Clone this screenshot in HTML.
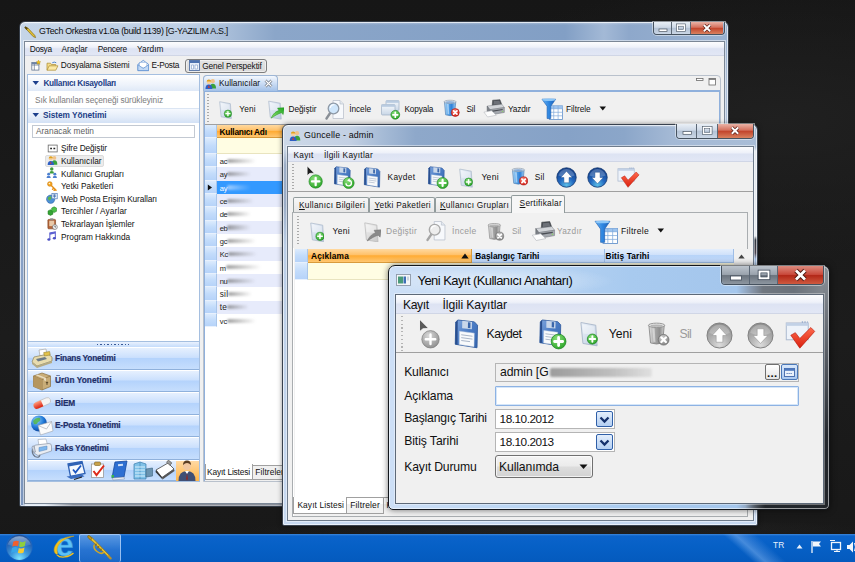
<!DOCTYPE html>
<html lang="tr">
<head>
<meta charset="utf-8">
<title>GTech Orkestra</title>
<style>
*{box-sizing:border-box;margin:0;padding:0}
html,body{width:855px;height:562px;overflow:hidden}
body{background:#1a1a1a;font-family:"Liberation Sans",sans-serif;font-size:11px;color:#111;position:relative}
.abs,.t{position:absolute}
.t{white-space:nowrap;line-height:1;color:#111}
.b{font-weight:bold}
u{text-decoration:underline;text-underline-offset:1px}
.menubar{background:linear-gradient(180deg,#fdfdfe 0,#eef1f9 40%,#dde3f3 52%,#e2e7f5 100%);border-bottom:1px solid #d0d6e6}
.cap{display:flex;border:1px solid #46525f;border-top:none;border-radius:0 0 4px 4px;overflow:hidden;box-shadow:0 0 0 1px rgba(255,255,255,.45)}
.cap i{display:block;height:100%;border-right:1px solid #5b6775;background:linear-gradient(180deg,#e9eff6 0,#cdd8e6 45%,#b3c2d5 50%,#cbd7e6 100%);position:relative}
.cap i.x{border-right:none;background:linear-gradient(180deg,#eab3a6 0,#d4705d 45%,#c1422a 50%,#d9815f 100%)}
.cap.act i{background:linear-gradient(180deg,#bcc4cd 0,#9aa3ad 47%,#6b747e 53%,#8d96a0 100%)}
.cap.act i.x{background:linear-gradient(180deg,#dd8b7e 0,#c9493b 47%,#b22818 53%,#cf5a40 100%)}
.navbtn{background:linear-gradient(180deg,#e6f0fe 0,#cbe0fd 45%,#b4d3fc 50%,#c6defd 100%);border-top:1px solid #fff;border-bottom:1px solid #8fb1dc}
.hdr{background:linear-gradient(180deg,#e4eefc 0,#cfe1fa 45%,#b8d4f8 50%,#c3dafa 100%);border-right:1px solid #9ebde6;border-bottom:1px solid #9ebde6}
.hdro{background:linear-gradient(180deg,#ffd9a0 0,#ffc169 45%,#ffab33 52%,#ffc772 100%);border-right:1px solid #d99b3c;border-bottom:1px solid #d99b3c}
.ind{background:linear-gradient(180deg,#dcebfd 0,#c3dcfb 50%,#b6d3f9 100%);border-bottom:1px solid #e8f1fd;border-right:1px solid #a9c6ea}
.grip{width:2px;background:repeating-linear-gradient(180deg,#a9a9a9 0,#a9a9a9 1px,transparent 1px,transparent 3px)}
.smear{filter:blur(.9px);border-radius:2px}
.tab{border:1px solid #919b9c;border-bottom:none;border-radius:2px 2px 0 0;background:linear-gradient(180deg,#f7f7f7,#e6e6e6)}
</style>
</head>
<body>
<div class="abs" style="left:0.0px;top:0.0px;width:855.0px;height:562.0px;background:radial-gradient(ellipse 420px 14px at 560px 529px,rgba(60,60,60,.3),rgba(40,40,40,0) 75%),radial-gradient(ellipse 500px 200px at 780px 120px,#202020,rgba(26,26,26,0) 70%),linear-gradient(180deg,#161616,#1c1c1c 60%,#181818)"></div>
<div class="abs" style="left:0.0px;top:534.0px;width:855.0px;height:28.0px;background:linear-gradient(42deg,rgba(255,255,255,0) 0,rgba(255,255,255,0) 85%,rgba(130,180,240,.5) 86.4%,rgba(120,170,235,.35) 87.2%,rgba(255,255,255,0) 88.8%),linear-gradient(180deg,#3d88dc 0,#0b63ca 2px,#0660c6 45%,#045abe 100%)"></div>
<svg class="abs" style="left:4px;top:533px" width="31" height="29" viewBox="0 0 31 29"><defs><radialGradient id="orb" cx="50%" cy="95%" r="95%"><stop offset="0" stop-color="#7fe4ff"/><stop offset=".35" stop-color="#3d9be0"/><stop offset=".75" stop-color="#2563b4"/><stop offset="1" stop-color="#1e4f98"/></radialGradient><linearGradient id="orbh" x1="0" y1="0" x2="0" y2="1"><stop offset="0" stop-color="#fff" stop-opacity=".5"/><stop offset="1" stop-color="#fff" stop-opacity=".05"/></linearGradient></defs><circle cx="15.3" cy="14.3" r="13.4" fill="#2a69bd" opacity=".55"/><circle cx="15.3" cy="14.3" r="12.6" fill="url(#orb)"/><path d="M3.500 11.500 A12.500 12.500 0 0 1 27 11.500 Q15 16 3.500 11.500Z" fill="url(#orbh)"/><path d="M9.200 8.800 q2.900 -1.900 5.700 -.5 l-.9 5 q-2.800 -1.400 -5.700 .4z" fill="#f0602e"/><path d="M16 8.600 q2.800 1.300 5.700 -.5 l-.9 5 q-2.900 1.700 -5.700 .4z" fill="#8fcf3c"/><path d="M8 15 q2.900 -1.800 5.700 -.4 l-.9 5 q-2.800 -1.400 -5.700 .4z" fill="#38a6ea"/><path d="M14.800 14.900 q2.800 1.300 5.700 -.5 l-.9 5 q-2.900 1.700 -5.700 .4z" fill="#f9cb2e"/></svg>
<svg class="abs" style="left:51px;top:534px" width="28" height="26" viewBox="0 0 28 26"><text x="4.200" y="21.600" font-family="Liberation Sans,sans-serif" font-size="33" font-weight="bold" fill="#5cc1f7" stroke="#2f8fd6" stroke-width=".5">e</text><path d="M5.500 20.500 C-1 16 6 2.500 23 2.200 C11 4.500 3.500 12 6.800 19.500" fill="#f5c21a" stroke="#d9a30c" stroke-width=".5"/><path d="M6 20.800 C9 24.500 18 23.500 22.500 19" fill="none" stroke="#f5c21a" stroke-width="1.300"/></svg>
<div class="abs" style="left:79.0px;top:534.0px;width:41.5px;height:28.0px;background:linear-gradient(180deg,rgba(170,205,250,.5),rgba(95,150,230,.38) 55%,rgba(80,135,220,.3));border:1px solid rgba(190,218,252,.75);border-bottom:none;border-radius:2px"></div>
<svg class="abs" style="left:87px;top:535px" width="25" height="25" viewBox="0 0 25 25"><path d="M1.500 1.200 Q3 5.500 5.500 6.300 L21.500 22.200 L23 21 L7.200 4.700 Q5.800 2.300 1.500 1.200Z" fill="#e9c433" stroke="#8d6e12" stroke-width=".7"/><ellipse cx="2.700" cy="2.600" rx="2.500" ry="1.300" transform="rotate(45 2.700 2.600)" fill="#c59a1c" stroke="#7a5f10" stroke-width=".6"/><path d="M7.500 9.500 Q5.500 13 10 16.500 Q14.500 20 17 17" fill="none" stroke="#d1a826" stroke-width="1.500"/><path d="M9.500 8.800 L8 10.500 M12 11.300 L10.500 13 M14.500 13.800 L13 15.500" stroke="#8d6e12" stroke-width="1.300"/><path d="M21.500 21.300 L23.600 23.400" stroke="#b8922a" stroke-width="2.200" stroke-linecap="round"/></svg>
<div class="t" id="t0" style="left:773.00px;top:541.40px;font-size:8.40px;letter-spacing:0.164px;color:#e9f1fb;">TR</div>
<svg class="abs" style="left:794px;top:538px" width="61" height="18" viewBox="0 0 61 18"><path d="M2.5 10.5 L5.5 6.5 L8.5 10.5Z" fill="#e8f0fb"/><path d="M18 3 V15" stroke="#f2f6fc" stroke-width="1.3"/><path d="M19 3.5 h8 l-2 2.5 l2 2.5 h-8z" fill="#f2f6fc"/><rect x="37.5" y="4.5" width="9" height="7" fill="none" stroke="#f2f6fc" stroke-width="1.3"/><path d="M36 2.5 h5 M40 13.5 h6 M43 11.5 v2" stroke="#f2f6fc" stroke-width="1.2"/><path d="M53 7 h2.5 l3.5 -3.5 v11 l-3.500 -3.5 h-2.500z" fill="#f2f6fc"/><path d="M60.500 5 q2 4 0 8" stroke="#f2f6fc" fill="none" stroke-width="1"/></svg>
<!-- window 1 : GTech Orkestra -->
<div class="abs" style="left:19.0px;top:21.2px;width:710.0px;height:486.3px;border:1px solid #343c47;border-radius:6px 6px 2px 2px;background:linear-gradient(90deg,rgba(0,0,0,0) 0,rgba(0,0,0,0) 3.5%,rgba(15,25,45,.95) 7.5%,rgba(15,25,45,.95) 100%) 0 100%/100% 4px no-repeat,linear-gradient(180deg,rgba(150,172,204,0) 0,rgba(150,172,204,0) 8%,rgba(132,158,196,.9) 40%,rgba(120,146,186,.95) 100%) 0 0/5px 100% no-repeat,linear-gradient(180deg,rgba(150,172,204,0) 0,rgba(150,172,204,0) 5%,rgba(176,194,218,.9) 12%,rgba(176,194,218,.9) 100%) 100% 0/5px 100% no-repeat,linear-gradient(180deg,rgba(255,255,255,.35) 0,rgba(255,255,255,0) 3px,rgba(255,255,255,0) 100%),linear-gradient(90deg,#c5d5e8 0,#bdcee4 24%,#a5bbd7 30%,#8ba6c9 36%,#829fc5 77%,#a3b9d6 82.500%,#8ea8cb 86%,#9ab2d1 100%);box-shadow:inset 0 0 0 1px rgba(255,255,255,.65)"></div>
<svg class="abs" style="left:23.500px;top:25.500px" width="13" height="13" viewBox="0 0 14 14"><path d="M1.5 1.500 L4 2 L11.500 10 L12.500 12.500 L10 11.500 L2.500 3.500Z" fill="#e3c233" stroke="#7a6212" stroke-width=".7"/><path d="M1 1 L3.500 3.500" stroke="#5c4a0e" stroke-width="2"/></svg>
<div class="t" id="t1" style="left:39.00px;top:27.25px;font-size:8.90px;letter-spacing:-0.317px;color:#0c0c0c;">GTech Orkestra v1.0a (build 1139) [G-YAZILIM A.S.]</div>
<div class="abs cap" style="left:652.5px;top:22.0px;width:72.0px;height:13.0px;"><i style="width:19px"><svg width="18" height="12" viewBox="0 0 18 12" style="position:absolute;left:0;top:0"><rect x="5" y="7" width="8" height="2.600" fill="#fff" stroke="#4a5562" stroke-width=".7"/></svg></i><i style="width:19px"><svg width="18" height="12" viewBox="0 0 18 12" style="position:absolute;left:0;top:0"><rect x="5.500" y="3" width="7" height="5.500" fill="none" stroke="#fff" stroke-width="1.700"/><rect x="4.400" y="1.900" width="9.200" height="7.700" fill="none" stroke="#4a5562" stroke-width=".6"/><rect x="6.700" y="4.200" width="4.600" height="3.100" fill="none" stroke="#4a5562" stroke-width=".5"/></svg></i><i class="x" style="width:33px"><svg width="32" height="12" viewBox="0 0 32 12" style="position:absolute;left:0;top:0"><path d="M12.800 3 L19.200 9.300 M19.200 3 L12.800 9.300" stroke="#5a2018" stroke-width="3.200"/><path d="M12.800 3 L19.200 9.300 M19.200 3 L12.800 9.300" stroke="#fff" stroke-width="1.900"/></svg></i></div>
<div class="abs" style="left:24.0px;top:41.0px;width:701.0px;height:463.0px;background:#f0f0f0;border:1px solid #7b8796;box-shadow:0 0 0 1px rgba(255,255,255,.5)"></div>
<div class="abs menubar" style="left:25.0px;top:42.0px;width:699.0px;height:14.0px;"></div>
<div class="t" id="t2" style="left:29.70px;top:44.95px;font-size:8.30px;letter-spacing:-0.286px;">Dosya</div>
<div class="t" id="t3" style="left:61.60px;top:44.95px;font-size:8.30px;letter-spacing:-0.040px;">Araçlar</div>
<div class="t" id="t4" style="left:97.70px;top:44.95px;font-size:8.30px;letter-spacing:-0.229px;">Pencere</div>
<div class="t" id="t5" style="left:137.00px;top:44.95px;font-size:8.30px;letter-spacing:0.060px;">Yardım</div>
<svg class="abs" style="left:31px;top:60px" width="10" height="11" viewBox="0 0 12 13"><rect x="1" y="3" width="8.500" height="9" fill="#fff" stroke="#5d6f8c" stroke-width=".9"/><path d="M1 6h8.500M4 3v9" stroke="#5d6f8c" stroke-width=".8"/><rect x="1" y="3" width="8.500" height="2" fill="#6d83a8"/><path d="M9 0 l.8 1.800 l1.900 .2 l-1.400 1.300 l.4 1.900 l-1.700 -1 l-1.700 1 l.4 -1.900 l-1.400 -1.300 l1.900 -.2z" fill="#f2c21c" stroke="#a98209" stroke-width=".4"/></svg>
<svg class="abs" style="left:46px;top:61px" width="12.500" height="10.500" viewBox="0 0 14 12"><path d="M1 10.500 V2.500 H5 L6 4 H11 V5.500" fill="#f5dc8a" stroke="#a98a2e" stroke-width=".8"/><path d="M1 10.500 L3.500 5.500 H13.500 L11 10.500Z" fill="#fbe9a6" stroke="#a98a2e" stroke-width=".8"/><path d="M7 2 q2.500 -1.500 4.500 0" fill="none" stroke="#3b78c9" stroke-width="1"/></svg>
<div class="t" id="t6" style="left:60.80px;top:61.25px;font-size:8.30px;letter-spacing:-0.136px;">Dosyalama Sistemi</div>
<svg class="abs" style="left:136.500px;top:59px" width="12.500" height="12.500" viewBox="0 0 14 14"><path d="M1 6 L7 1.500 L13 6 V13 H1Z" fill="#dbe9fa" stroke="#5f8fd0" stroke-width=".9"/><rect x="3" y="4" width="8" height="6" fill="#fff" stroke="#8fb0dc" stroke-width=".6"/><path d="M1 6.500 L7 10.500 L13 6.500 V13 H1Z" fill="#c2d9f5" stroke="#5f8fd0" stroke-width=".8"/></svg>
<div class="t" id="t7" style="left:151.60px;top:61.25px;font-size:8.30px;letter-spacing:-0.302px;">E-Posta</div>
<div class="abs" style="left:185.0px;top:58.5px;width:82.0px;height:14.0px;border:1px solid #7d7d7d;border-radius:3px;background:linear-gradient(180deg,#e3e3e3,#d9d9d9);box-shadow:inset 0 0 0 1px rgba(255,255,255,.5)"></div>
<svg class="abs" style="left:189px;top:60px" width="11" height="11" viewBox="0 0 11 11"><rect x=".5" y=".5" width="10" height="10" fill="#e6eefa" stroke="#5573a6" stroke-width=".9"/><rect x=".5" y=".5" width="10" height="2.500" fill="#4d72b0"/><path d="M2.500 5 v4 h2 v-4z M6 5 v4 h2.500 v-4z" fill="#fff" stroke="#7c99c8" stroke-width=".6"/></svg>
<div class="t" id="t8" style="left:202.20px;top:61.85px;font-size:8.30px;letter-spacing:-0.109px;">Genel Perspektif</div>
<div class="abs" style="left:27.0px;top:74.0px;width:172.5px;height:407.5px;background:#fff;border:1px solid #a5bfe0"></div>
<div class="abs" style="left:28.0px;top:75.0px;width:170.5px;height:16.0px;background:linear-gradient(180deg,#ffffff 0,#eef3fb 60%,#dfe9f7 100%)"></div>
<svg class="abs" style="left:32px;top:80px" width="8" height="6" viewBox="0 0 8 6"><path d="M.5 1 H7 L3.750 5Z" fill="#1c3f8c"/></svg>
<div class="t b" id="t9" style="left:43.40px;top:78.95px;font-size:8.30px;letter-spacing:-0.303px;color:#1d3e86;">Kullanıcı Kısayolları</div>
<div class="t" id="t10" style="left:35.00px;top:96.45px;font-size:8.30px;letter-spacing:-0.070px;color:#7b7b7b;">Sık kullanılan seçeneği sürükleyiniz</div>
<div class="abs" style="left:28.0px;top:108.0px;width:170.5px;height:14.5px;background:linear-gradient(180deg,#f6f9fe 0,#e3ecf9 60%,#d3e1f5 100%);border-top:1px solid #dbe5f3"></div>
<svg class="abs" style="left:32px;top:112px" width="8" height="6" viewBox="0 0 8 6"><path d="M.5 1 H7 L3.750 5Z" fill="#1c3f8c"/></svg>
<div class="t b" id="t11" style="left:43.00px;top:110.95px;font-size:8.30px;letter-spacing:-0.060px;color:#1d3e86;">Sistem Yönetimi</div>
<div class="abs" style="left:32.0px;top:124.5px;width:163.0px;height:13.5px;background:#fff;border:1px solid #c3c9d2"></div>
<div class="t" id="t12" style="left:36.00px;top:127.45px;font-size:8.30px;letter-spacing:0.025px;color:#5e5e5e;">Aranacak metin</div>
<div class="abs" style="left:44.5px;top:154.5px;width:59.0px;height:12.5px;background:#ececec;border:1px solid #dcdcdc;border-radius:2px"></div>
<svg class="abs" style="left:46.800px;top:143.500px" width="11.400" height="9" viewBox="0 0 12 10"><rect x="1" y="1.200" width="10" height="7.600" fill="#fff" stroke="#6a6a6a" stroke-width=".9"/><path d="M3.200 5h2M6.800 5h2" stroke="#222" stroke-width="1.900"/></svg>
<svg class="abs" style="left:46.8px;top:155.3px;" width="11.0" height="10.5" viewBox="0 0 13 13"><circle cx="8.8" cy="3.6" r="2.4" fill="#f0c28a"/><path d="M5.5 12 Q5.5 6.6 8.8 6.6 Q12.5 6.6 12.5 12Z" fill="#3aa23a"/><circle cx="4.4" cy="4.4" r="2.5" fill="#f5cf9c"/><path d="M4.4 1.6 a2.6 2.6 0 0 1 2.6 2.4 L1.8 4 a2.6 2.6 0 0 1 2.6 -2.4Z" fill="#e0a31e"/><path d="M.5 12.5 Q.5 7.4 4.4 7.4 Q8.3 7.4 8.3 12.5Z" fill="#2d5fc4"/><path d="M4.4 7.6 L3.6 10.5 L4.4 11.5 L5.2 10.5Z" fill="#d63a2a"/></svg>
<svg class="abs" style="left:46.300px;top:167.300px" width="11.500" height="11" viewBox="0 0 12 12"><circle cx="6" cy="2.300" r="1.900" fill="#3f9c3a"/><path d="M3.500 7 Q3.500 4.300 6 4.300 Q8.500 4.300 8.500 7Z" fill="#3f9c3a"/><circle cx="2.600" cy="7.800" r="1.600" fill="#4d7fd0"/><path d="M.3 12 Q.3 9.500 2.600 9.500 Q4.900 9.500 4.900 12Z" fill="#4d7fd0"/><circle cx="9.400" cy="7.800" r="1.600" fill="#4d7fd0"/><path d="M7.100 12 Q7.100 9.500 9.400 9.500 Q11.700 9.500 11.700 12Z" fill="#4d7fd0"/></svg>
<svg class="abs" style="left:47.200px;top:180.800px" width="10.300" height="10.600" viewBox="0 0 12 12"><circle cx="3.300" cy="3.300" r="2.700" fill="#f5a623" stroke="#c97a0a" stroke-width=".7"/><circle cx="2.800" cy="2.800" r=".9" fill="#fff3d6"/><path d="M5 5 L10.500 10.500 M8 8 L6.500 9.500 M9.600 9.600 L8.300 11" stroke="#e8921a" stroke-width="1.700" stroke-linecap="round"/></svg>
<svg class="abs" style="left:46px;top:193.200px" width="11.800" height="10.800" viewBox="0 0 14 13"><circle cx="5.500" cy="7.500" r="5" fill="#4e8fd6" stroke="#2c5f9e" stroke-width=".6"/><path d="M2 6 q2 -3 4.500 -1.500 q1 2 -1 3 q-1 2.500 -2.500 1z" fill="#5db648"/><rect x="7" y=".6" width="6.400" height="6.400" fill="#eaf2fc" stroke="#4a74b5" stroke-width=".8"/><path d="M8.500 2.500h3.500M8.500 4h3.500M10 1.500v4.500" stroke="#2f5ea6" stroke-width=".8"/></svg>
<svg class="abs" style="left:46.800px;top:205.800px" width="10.200" height="9.800" viewBox="0 0 12 12"><path d="M1 6 L4 4.500 L7 6 V10 L4 11.500 L1 10Z" fill="#35a335" stroke="#1e7a1e" stroke-width=".6"/><path d="M5.500 2.500 L8.500 1 L11.500 2.500 V6.500 L8.500 8 L5.500 6.500Z" fill="#4cc04a" stroke="#1e7a1e" stroke-width=".6"/></svg>
<svg class="abs" style="left:47.200px;top:217.800px" width="10.800" height="11.800" viewBox="0 0 12 13"><rect x="1" y="1.500" width="8.500" height="10.500" rx="1" fill="#b5653a" stroke="#7c3f1d" stroke-width=".7"/><rect x="2.500" y="3" width="5.500" height="6" fill="#e9c9a8"/><rect x="3.500" y=".3" width="3.500" height="2.200" fill="#8b8b8b"/><circle cx="8.800" cy="10" r="2.700" fill="#f1f1f1" stroke="#666" stroke-width=".7"/><path d="M8.800 8.500V10h1.200" stroke="#333" stroke-width=".7" fill="none"/></svg>
<svg class="abs" style="left:46.800px;top:231.200px" width="9.600" height="10.200" viewBox="0 0 12 13"><path d="M3.500 10.500 V2.500 L10.500 1 V9" fill="none" stroke="#5b5fd0" stroke-width="1.300"/><path d="M3.500 2.500 L10.500 1 V3.300 L3.500 4.800Z" fill="#5b5fd0"/><ellipse cx="2.300" cy="10.800" rx="2" ry="1.500" fill="#4b4fc4"/><ellipse cx="9.300" cy="9.300" rx="2" ry="1.500" fill="#4b4fc4"/></svg>
<div class="t" id="t13" style="left:61.00px;top:144.45px;font-size:8.30px;letter-spacing:-0.107px;">Şifre Değiştir</div>
<div class="t" id="t14" style="left:61.00px;top:157.05px;font-size:8.30px;letter-spacing:-0.046px;">Kullanıcılar</div>
<div class="t" id="t15" style="left:61.00px;top:169.65px;font-size:8.30px;letter-spacing:-0.062px;">Kullanıcı Grupları</div>
<div class="t" id="t16" style="left:61.00px;top:182.25px;font-size:8.30px;">Yetki Paketleri</div>
<div class="t" id="t17" style="left:61.00px;top:194.85px;font-size:8.30px;letter-spacing:-0.115px;">Web Posta Erişim Kuralları</div>
<div class="t" id="t18" style="left:61.00px;top:207.45px;font-size:8.30px;letter-spacing:0.108px;">Tercihler / Ayarlar</div>
<div class="t" id="t19" style="left:61.00px;top:220.05px;font-size:8.30px;letter-spacing:-0.037px;">Tekrarlayan İşlemler</div>
<div class="t" id="t20" style="left:61.00px;top:232.65px;font-size:8.30px;">Program Hakkında</div>
<div class="abs" style="left:28.0px;top:341.0px;width:170.5px;height:6.0px;background:linear-gradient(180deg,#eaf2fe,#c5dcfb);border-top:1px solid #a5bfe0"></div>
<div class="abs" style="left:97.0px;top:343.5px;width:32.0px;height:1.5px;background:repeating-linear-gradient(90deg,#3a5a98 0,#3a5a98 1.500px,transparent 1.500px,transparent 3.500px)"></div>
<div class="abs navbtn" style="left:28.0px;top:347.0px;width:170.5px;height:22.5px;"></div>
<div class="t b" id="t21" style="left:55.00px;top:353.65px;font-size:8.30px;letter-spacing:-0.188px;color:#1f2f68;-webkit-text-stroke:.2px #1f2f68;">Finans Yonetimi</div>
<div class="abs navbtn" style="left:28.0px;top:369.5px;width:170.5px;height:22.5px;"></div>
<div class="t b" id="t22" style="left:55.00px;top:376.15px;font-size:8.30px;letter-spacing:0.043px;color:#1f2f68;-webkit-text-stroke:.2px #1f2f68;">Ürün Yonetimi</div>
<div class="abs navbtn" style="left:28.0px;top:392.0px;width:170.5px;height:22.5px;"></div>
<div class="t b" id="t23" style="left:55.00px;top:398.65px;font-size:8.30px;letter-spacing:-0.188px;color:#1f2f68;-webkit-text-stroke:.2px #1f2f68;">BİEM</div>
<div class="abs navbtn" style="left:28.0px;top:414.5px;width:170.5px;height:22.5px;"></div>
<div class="t b" id="t24" style="left:55.00px;top:421.15px;font-size:8.30px;letter-spacing:-0.162px;color:#1f2f68;-webkit-text-stroke:.2px #1f2f68;">E-Posta Yönetimi</div>
<div class="abs navbtn" style="left:28.0px;top:437.0px;width:170.5px;height:22.5px;"></div>
<div class="t b" id="t25" style="left:55.00px;top:443.65px;font-size:8.30px;letter-spacing:-0.201px;color:#1f2f68;-webkit-text-stroke:.2px #1f2f68;">Faks Yönetimi</div>
<div class="abs navbtn" style="left:28.0px;top:459.5px;width:170.5px;height:21.0px;"></div>
<svg class="abs" style="left:31px;top:348px" width="22" height="21" viewBox="0 0 22 21"><path d="M8 2 L15 1 L16 7 L9 8Z" fill="#fff" stroke="#999" stroke-width=".6"/><path d="M3 9 L17 6 L21 9 L21 13 L6 18 L1 14 Z" fill="#e8dcae" stroke="#8c825c" stroke-width=".7"/><path d="M1 14 L6 18 L21 13 V15 L6 20 L1 16Z" fill="#b5ab84"/><path d="M5 11 L14 9 L16 11 L7 13.500Z" fill="#6c7a86"/><rect x="13" y="4" width="6" height="3.500" fill="#e3c24a" stroke="#8c7a2c" stroke-width=".5" transform="rotate(-10 16 6)"/></svg>
<svg class="abs" style="left:32px;top:371px" width="20" height="20" viewBox="0 0 20 20"><path d="M1.500 5 L10 2 L18.500 5 V15.500 L10 19 L1.500 15.500Z" fill="#c9ad78" stroke="#8a6f3e" stroke-width=".7"/><path d="M1.500 5 L10 8.500 L18.500 5 M10 8.500 V19" stroke="#8a6f3e" stroke-width=".7" fill="none"/><path d="M1.500 5 L10 8.500 V19 L1.500 15.500Z" fill="#b5965f"/><path d="M5.500 3.500 L14 7 V10 L12 9.300 V7.800 L3.700 4.300Z" fill="#e9dcc0"/><path d="M13.500 11.500 l1.500 -1 l1.500 1 l-1 .3 v2 h-1 v-2z" fill="#4a3a1e"/></svg>
<svg class="abs" style="left:32px;top:395px" width="20" height="16" viewBox="0 0 20 16"><defs><linearGradient id="pill" x1="0" y1="0" x2="0" y2="1"><stop offset="0" stop-color="#ff9a7a"/><stop offset="1" stop-color="#d81e10"/></linearGradient></defs><g transform="rotate(-24 10 8)"><rect x="1" y="5" width="18" height="6.500" rx="3.250" fill="#f4f4f4" stroke="#b9b9b9" stroke-width=".6"/><path d="M4.250 5 H10 V11.500 H4.250 A3.250 3.250 0 0 1 4.250 5Z" fill="url(#pill)"/></g></svg>
<svg class="abs" style="left:30px;top:415px" width="24" height="21" viewBox="0 0 24 21"><defs><radialGradient id="glb" cx="35%" cy="30%" r="75%"><stop offset="0" stop-color="#8fd0ff"/><stop offset=".6" stop-color="#1f77d6"/><stop offset="1" stop-color="#0c3f94"/></radialGradient></defs><circle cx="9" cy="8.500" r="8" fill="url(#glb)"/><path d="M3 6 q3 -4 7 -3 q1 3 -2 4 q-1 3 -4 2z" fill="#54b848" opacity=".85"/><path d="M8 10.500 L21.500 6.500 L23 16 L10.500 20Z" fill="#fbfbfb" stroke="#9da3ad" stroke-width=".6"/><path d="M8 10.500 L16.500 14 L21.500 6.500" fill="none" stroke="#9da3ad" stroke-width=".6"/></svg>
<svg class="abs" style="left:31px;top:438px" width="22" height="21" viewBox="0 0 22 21"><path d="M7 1.500 L15 1 L16.500 7 L8 8Z" fill="#fff" stroke="#9aa4b2" stroke-width=".6"/><path d="M3 9 Q3 7 5 7 L18 5.500 Q20.500 5.500 20.500 8 V13 L7 17.500 L3 15Z" fill="#e9edf3" stroke="#8b95a5" stroke-width=".7"/><path d="M8 9.500 L16 8 V11.500 L8 13.500Z" fill="#7db7ee" stroke="#5a86b8" stroke-width=".5"/><path d="M1.500 11 Q.5 16 4 18.500 Q8 20.500 9 17" fill="none" stroke="#6c7685" stroke-width="1.200"/><path d="M1 9.500 Q1 7.500 3 8 L4.500 14 Q2.500 15 2 13Z" fill="#cfd6e0" stroke="#7d8796" stroke-width=".6"/></svg>
<div class="abs" style="left:176.0px;top:460.5px;width:22.5px;height:20.0px;background:linear-gradient(180deg,#ffd9a3,#ffb548)"></div>
<svg class="abs" style="left:65px;top:460px" width="134" height="21" viewBox="0 0 134 21"><g><path d="M3 4 L17 1.500 L20 13.500 L5.500 16.500Z" fill="#f4f8fd" stroke="#2f62b5" stroke-width="1.300"/><path d="M3 4 L17 1.500 L17.700 4 L3.700 6.500Z" fill="#2f62b5"/><path d="M8 9.500 L10.500 12.500 L16 5.500" fill="none" stroke="#1c56c0" stroke-width="1.800"/><path d="M1.500 16.500 L17 14.500 L19.500 16.500 L6 19Z" fill="#3a6cc0"/><path d="M9 19.500 L17 17" stroke="#222" stroke-width="1.300"/></g><g transform="translate(25 0)"><rect x="1.500" y="4" width="12" height="13.500" fill="#fff" stroke="#9a9a9a" stroke-width=".8"/><rect x="4.500" y="2" width="6" height="3.500" rx="1" fill="#c8a24a" stroke="#7c6323" stroke-width=".6"/><path d="M3.500 11 L6.500 15 L14 5.500" fill="none" stroke="#dc2a1a" stroke-width="2"/></g><g transform="translate(45 0)"><path d="M5 2 L17 1 L14 17 L2 18Z" fill="#2d6fd2" stroke="#164a9e" stroke-width=".8"/><path d="M2 18 L14 17 L14.500 19 L3 20Z" fill="#e9eef6" stroke="#7a8aa3" stroke-width=".5"/><rect x="8" y="4" width="5" height="2" fill="#cfe0f7" transform="rotate(-5 10 5)"/><rect x="1.500" y="15" width="2.500" height="2.500" fill="#39b54a"/></g><g transform="translate(67 0)"><path d="M2 4 L8 2 L14 4 V19 H2Z" fill="#7fc1e8" stroke="#3d7fae" stroke-width=".7"/><path d="M8 2 V19" stroke="#3d7fae" stroke-width=".6"/><path d="M3 7h10M3 10h10M3 13h10M3 16h10" stroke="#d9f0fc" stroke-width="1"/><path d="M14 9 L20.500 8 V16 L14 17Z" fill="#6a93b0" stroke="#3b627e" stroke-width=".6"/></g><g transform="translate(88 0)"><path d="M3 10 L15 3 L21 9 L9 17.500Z" fill="#fff" stroke="#444" stroke-width=".8"/><path d="M3 10 L9 17.500 L9.500 19.500 L2.500 12Z" fill="#333"/><path d="M9 17.500 L21 9 L21.500 11 L9.500 19.500Z" fill="#555"/><rect x="14" y="1" width="4.500" height="3" fill="#9a9a9a" stroke="#444" stroke-width=".5" transform="rotate(40 16 2.500)"/></g><g transform="translate(111 0)"><circle cx="11" cy="6" r="4" fill="#f1c7a0"/><path d="M7 5 q0 -4.500 4 -4.500 q4 0 4 4.500 q-2 -2 -4 -2 q-2 0 -4 2z" fill="#5a3d22"/><path d="M2.500 21 Q2.500 11 11 11 Q19.500 11 19.500 21Z" fill="#3f4f75"/><path d="M9 11 L11 14 L13 11Z" fill="#fff"/><path d="M11 13 L10 19 L11 20.500 L12 19Z" fill="#8a2a2a"/></g></svg>
<div class="abs" style="left:202.5px;top:74.5px;width:518.5px;height:407.0px;background:#f0f0f0;border:1px solid #b9c1cc;border-radius:4px 4px 0 0"></div>
<div class="abs" style="left:203.5px;top:90.0px;width:516.5px;height:1.5px;background:#8fb0dc"></div>
<div class="abs" style="left:203.0px;top:74.5px;width:75.0px;height:16.5px;background:linear-gradient(180deg,#f4f8fd 0,#d3e2f6 40%,#a3c1e8 100%);border:1px solid #9db6d6;border-bottom:none;border-radius:4px 4px 0 0"></div>
<svg class="abs" style="left:205.0px;top:77.5px;" width="11.5" height="11.5" viewBox="0 0 13 13"><circle cx="8.8" cy="3.6" r="2.4" fill="#f0c28a"/><path d="M5.5 12 Q5.5 6.6 8.8 6.6 Q12.5 6.6 12.5 12Z" fill="#3aa23a"/><circle cx="4.4" cy="4.4" r="2.5" fill="#f5cf9c"/><path d="M4.4 1.6 a2.6 2.6 0 0 1 2.6 2.4 L1.8 4 a2.6 2.6 0 0 1 2.6 -2.4Z" fill="#e0a31e"/><path d="M.5 12.5 Q.5 7.4 4.4 7.4 Q8.3 7.4 8.3 12.5Z" fill="#2d5fc4"/><path d="M4.4 7.6 L3.6 10.5 L4.4 11.5 L5.2 10.5Z" fill="#d63a2a"/></svg>
<div class="t" id="t26" style="left:219.00px;top:79.25px;font-size:8.30px;">Kullanıcılar</div>
<svg class="abs" style="left:264px;top:79px" width="9" height="9" viewBox="0 0 9 9"><path d="M1.500 1.500 L7.500 7.500 M7.500 1.500 L1.500 7.500" stroke="#6e7784" stroke-width="2.600"/><path d="M1.500 1.500 L7.500 7.500 M7.500 1.500 L1.500 7.500" stroke="#fff" stroke-width="1.100"/></svg>
<svg class="abs" style="left:695px;top:77px" width="24" height="10" viewBox="0 0 24 10"><rect x="1.500" y="1.500" width="6.500" height="2" fill="#fff" stroke="#6b6b6b" stroke-width=".8"/><rect x="14" y="1.500" width="6.500" height="6.500" fill="#fff" stroke="#6b6b6b" stroke-width=".8"/><path d="M14 2.200h6.500" stroke="#6b6b6b" stroke-width="1.200"/></svg>
<div class="abs" style="left:203.5px;top:91.5px;width:516.5px;height:389.0px;border:1px solid #8fb0dc;border-top:none;background:#fff"></div>
<div class="abs" style="left:204.5px;top:91.5px;width:514.5px;height:33.5px;background:#f0f0f0;border-bottom:1px solid #a0a0a0"></div>
<div class="abs grip" style="left:207.0px;top:94.0px;width:2.0px;height:29.0px;"></div>
<svg class="abs" style="left:218.5px;top:100.0px;" width="13.0" height="20.0" viewBox="0 0 16 22"><defs><linearGradient id="g1" x1="0" y1="0" x2="1" y2="1"><stop offset="0" stop-color="#eef3fa"/><stop offset="1" stop-color="#bccbe0"/></linearGradient></defs><path d="M.8 .8 L14 3.200 L15.200 21.500 L2.600 19.400 Z" fill="url(#g1)" stroke="#a9b7c9" stroke-width=".8"/><path d="M2.200 2.500 L12.800 4.400 L13.400 12 L2.900 10.600Z" fill="#fff" opacity=".35"/><defs><radialGradient id="g2" cx="40%" cy="30%" r="75%"><stop offset="0" stop-color="#8ae07a"/><stop offset="1" stop-color="#2aa326"/></radialGradient></defs><circle cx="11" cy="15.5" r="4.5" fill="url(#g2)" stroke="#14801a" stroke-width=".6"/><path d="M8.525 15.5h4.95M11 13.025v4.95" stroke="#fff" stroke-width="1.71" stroke-linecap="round"/></svg>
<div class="t" id="t27" style="left:239.30px;top:104.65px;font-size:8.30px;letter-spacing:0.160px;">Yeni</div>
<svg class="abs" style="left:267.5px;top:100.0px;" width="16.5" height="20.0" viewBox="0 0 19 22"><defs><linearGradient id="g4" x1="0" y1="0" x2="1" y2="1"><stop offset="0" stop-color="#eef3fa"/><stop offset="1" stop-color="#bccbe0"/></linearGradient></defs><path d="M.8 .8 L14 3.200 L15.200 21.500 L2.600 19.400 Z" fill="url(#g4)" stroke="#a9b7c9" stroke-width=".8"/><path d="M2.200 2.500 L12.800 4.400 L13.400 12 L2.900 10.600Z" fill="#fff" opacity=".35"/><defs><linearGradient id="g3" x1="0" y1="1" x2="1" y2="0"><stop offset="0" stop-color="#8fe070"/><stop offset="1" stop-color="#1fa51f"/></linearGradient></defs><path d="M3.500 20.500 C6.500 14.500 9.500 12.500 12.500 11.700 L11 8.800 L18.800 8.300 L17.500 16.300 L15.300 14.200 C11.500 15.500 8 17.500 3.500 20.500Z" fill="url(#g3)" stroke="#1c8a1c" stroke-width=".5"/></svg>
<div class="t" id="t28" style="left:288.40px;top:104.65px;font-size:8.30px;">Değiştir</div>
<svg class="abs" style="left:325.0px;top:98.5px;" width="20.0" height="22.0" viewBox="0 0 20 22"><path d="M8 1.5 H15 L18.5 5 V19.5 H8 Z" fill="#f7f9fc" stroke="#b4bcc8" stroke-width=".7"/><path d="M15 1.5V5H18.5" fill="#e3e8ef" stroke="#b4bcc8" stroke-width=".6"/><path d="M5.5 13.5 L1.5 19.5" stroke="#8a8f96" stroke-width="2.4" stroke-linecap="round"/><circle cx="8.5" cy="9.5" r="5.3" fill="#cfe6fb" stroke="#8e99a6" stroke-width="1.3"/><path d="M5.3 8.5 A3.6 3.6 0 0 1 9 5.8" stroke="#fff" stroke-width="1.1" fill="none" stroke-linecap="round"/></svg>
<div class="t" id="t29" style="left:349.20px;top:104.65px;font-size:8.30px;letter-spacing:-0.057px;">İncele</div>
<svg class="abs" style="left:379.5px;top:99.0px;" width="21.0" height="21.0" viewBox="0 0 21 21"><defs><linearGradient id="g6" x1="0" y1="0" x2="0" y2="1"><stop offset="0" stop-color="#f7fafd"/><stop offset="1" stop-color="#c8d6e6"/></linearGradient></defs><rect x="6" y="1.5" width="13" height="10" rx="1" fill="url(#g6)" stroke="#9fb0c4" stroke-width=".7"/><rect x="6" y="1.5" width="13" height="2.3" fill="#b9cbe0"/><rect x="1.5" y="5.5" width="13.5" height="10.5" rx="1" fill="url(#g6)" stroke="#9fb0c4" stroke-width=".7"/><rect x="1.5" y="5.5" width="13.5" height="2.3" fill="#b9cbe0"/><defs><radialGradient id="g7" cx="40%" cy="30%" r="75%"><stop offset="0" stop-color="#8ae07a"/><stop offset="1" stop-color="#2aa326"/></radialGradient></defs><circle cx="15.3" cy="15.8" r="4.4" fill="url(#g7)" stroke="#14801a" stroke-width=".6"/><path d="M12.88 15.8h4.840000000000001M15.3 13.38v4.840000000000001" stroke="#fff" stroke-width="1.6720000000000002" stroke-linecap="round"/></svg>
<div class="t" id="t30" style="left:404.40px;top:104.65px;font-size:8.30px;letter-spacing:-0.155px;">Kopyala</div>
<svg class="abs" style="left:443.0px;top:99.0px;" width="17.0" height="18.5" viewBox="0 0 18 19"><defs><linearGradient id="g8" x1="0" y1="0" x2="1" y2="0"><stop offset="0" stop-color="#bfe0f8"/><stop offset=".3" stop-color="#58a6ea"/><stop offset=".65" stop-color="#2f80d8"/><stop offset="1" stop-color="#9fcdf3"/></linearGradient></defs><path d="M1.500 2.800 H13.500 L12.200 16.500 Q7.500 18.200 2.800 16.500 Z" fill="url(#g8)" stroke="#3b6ea8" stroke-width=".6"/><path d="M4.200 5 L5 15.500 L6.600 15.800 L6 5Z" fill="#fff" opacity=".45"/><ellipse cx="7.500" cy="2.700" rx="6.400" ry="1.700" fill="#e3e9f0" stroke="#8e9cac" stroke-width=".7"/><ellipse cx="7.500" cy="2.900" rx="4.800" ry=".9" fill="#2c6fc0" opacity=".55"/><defs><radialGradient id="g9" cx="40%" cy="30%" r="75%"><stop offset="0" stop-color="#ff8d7d"/><stop offset="1" stop-color="#d3180f"/></radialGradient></defs><circle cx="13" cy="14" r="4.2" fill="url(#g9)" stroke="#a30f0a" stroke-width=".6"/><path d="M11.236 12.236l3.528 3.528M14.764 12.236l-3.528 3.528" stroke="#fff" stroke-width="1.764" stroke-linecap="round"/></svg>
<div class="t" id="t31" style="left:466.50px;top:104.65px;font-size:8.30px;letter-spacing:-0.245px;">Sil</div>
<svg class="abs" style="left:483.0px;top:99.0px;" width="22.0" height="18.5" viewBox="0 0 24 20"><path d="M10.500 1.200 L18.500 .6 L20.500 6 L10 7.200 Z" fill="#4d5157" stroke="#33363b" stroke-width=".5"/><path d="M11.800 2.200 L17.800 1.700 L19 5.200 L11.500 6Z" fill="#6d7178"/><path d="M4.500 7.600 L20.500 5.600 L23.300 9.200 L7.500 11.600 Z" fill="#d3d6da" stroke="#7b7f86" stroke-width=".5"/><path d="M7.500 11.600 L23.300 9.200 L23.300 14.600 L7.500 17.400 Z" fill="#a4a8ae" stroke="#6c7077" stroke-width=".5"/><path d="M4.500 7.600 L7.500 11.600 L7.500 17.400 L4.500 13.200 Z" fill="#7c8087" stroke="#5c6067" stroke-width=".5"/><path d="M9 12.600 L21.500 10.700 L21.500 12 L9 14Z" fill="#4a4e54"/><path d="M1 14.200 L9.500 12.800 L14.500 17.600 L5 19.500 Z" fill="#fdfdfd" stroke="#a3a7ad" stroke-width=".5"/><circle cx="21.300" cy="13.300" r=".7" fill="#86d860"/></svg>
<div class="t" id="t32" style="left:508.00px;top:104.65px;font-size:8.30px;letter-spacing:-0.179px;">Yazdır</div>
<svg class="abs" style="left:541.0px;top:98.0px;" width="22.5" height="22.5" viewBox="0 0 23 23"><defs><linearGradient id="g10" x1="0" y1="0" x2="1" y2="0"><stop offset="0" stop-color="#66b1f2"/><stop offset=".5" stop-color="#2f86e0"/><stop offset="1" stop-color="#1b5fb8"/></linearGradient></defs><rect x="8.5" y="8" width="13.5" height="14" fill="#fff" stroke="#5f8fca" stroke-width=".8"/><rect x="8.5" y="8" width="13.5" height="3" fill="#9cc3ee"/><path d="M8.5 11H22M8.5 14.6H22M8.5 18.2H22M13 8V22M17.5 8V22" stroke="#7fa8da" stroke-width=".7"/><path d="M1 1.2 H15 L10 8.5 V21 L6.2 21 V8.5 Z" fill="url(#g10)" stroke="#1d5cae" stroke-width=".6"/><ellipse cx="8" cy="1.8" rx="7" ry="1.3" fill="#8cc6f7"/></svg>
<div class="t" id="t33" style="left:566.00px;top:104.65px;font-size:8.30px;letter-spacing:-0.026px;">Filtrele</div>
<svg class="abs" style="left:599px;top:106px" width="8" height="5" viewBox="0 0 8 5"><path d="M.5 .5 H7 L3.750 4.500Z" fill="#111"/></svg>
<div class="abs ind" style="left:204.5px;top:125.0px;width:12.5px;height:13.0px;"></div>
<div class="abs hdro" style="left:217.0px;top:125.0px;width:300.0px;height:13.0px;"></div>
<div class="t b" id="t34" style="left:219.60px;top:127.75px;font-size:8.30px;letter-spacing:-0.212px;color:#000;">Kullanıcı Adı</div>
<div class="abs ind" style="left:204.5px;top:138.0px;width:12.5px;height:16.1px;"></div>
<div class="abs" style="left:217.0px;top:138.0px;width:502.0px;height:16.1px;background:#fffde3;border-bottom:1px solid #e9e4bf"></div>
<div class="abs ind" style="left:204.5px;top:154.1px;width:12.5px;height:13.3px;"></div>
<div class="abs" style="left:217.0px;top:154.1px;width:502.0px;height:13.3px;background:#ffffff"></div>
<div class="t" id="t35" style="left:219.70px;top:158.04px;font-size:7.50px;letter-spacing:-0.161px;color:#222;">ac</div>
<div class="abs smear" style="left:227.3px;top:158.5px;width:29.0px;height:4.4px;background:linear-gradient(90deg,rgba(100,100,100,.6),rgba(150,150,150,0))"></div>
<div class="abs ind" style="left:204.5px;top:167.4px;width:12.5px;height:13.3px;"></div>
<div class="abs" style="left:217.0px;top:167.4px;width:502.0px;height:13.3px;background:#e7ebfb"></div>
<div class="t" id="t36" style="left:219.70px;top:171.37px;font-size:7.50px;letter-spacing:-0.161px;color:#222;">ay</div>
<div class="abs smear" style="left:227.3px;top:171.8px;width:24.0px;height:4.4px;background:linear-gradient(90deg,rgba(100,100,100,.6),rgba(150,150,150,0))"></div>
<div class="abs ind" style="left:204.5px;top:180.8px;width:12.5px;height:13.3px;"></div>
<div class="abs" style="left:217.0px;top:180.8px;width:502.0px;height:13.3px;background:#3399ff"></div>
<div class="t" id="t37" style="left:219.70px;top:184.70px;font-size:7.50px;letter-spacing:-0.161px;color:#fff;">ay</div>
<div class="abs smear" style="left:227.3px;top:185.2px;width:24.0px;height:4.4px;background:linear-gradient(90deg,rgba(190,220,255,.75),rgba(150,150,150,0))"></div>
<div class="abs ind" style="left:204.5px;top:194.1px;width:12.5px;height:13.3px;"></div>
<div class="abs" style="left:217.0px;top:194.1px;width:502.0px;height:13.3px;background:#e7ebfb"></div>
<div class="t" id="t38" style="left:219.70px;top:198.03px;font-size:7.50px;letter-spacing:-0.161px;color:#222;">ce</div>
<div class="abs smear" style="left:227.3px;top:198.5px;width:27.0px;height:4.4px;background:linear-gradient(90deg,rgba(100,100,100,.6),rgba(150,150,150,0))"></div>
<div class="abs ind" style="left:204.5px;top:207.4px;width:12.5px;height:13.3px;"></div>
<div class="abs" style="left:217.0px;top:207.4px;width:502.0px;height:13.3px;background:#ffffff"></div>
<div class="t" id="t39" style="left:219.70px;top:211.36px;font-size:7.50px;letter-spacing:-0.372px;color:#222;">de</div>
<div class="abs smear" style="left:227.3px;top:211.8px;width:24.0px;height:4.4px;background:linear-gradient(90deg,rgba(100,100,100,.6),rgba(150,150,150,0))"></div>
<div class="abs ind" style="left:204.5px;top:220.8px;width:12.5px;height:13.3px;"></div>
<div class="abs" style="left:217.0px;top:220.8px;width:502.0px;height:13.3px;background:#e7ebfb"></div>
<div class="t" id="t40" style="left:219.70px;top:224.69px;font-size:7.50px;letter-spacing:-0.372px;color:#222;">eb</div>
<div class="abs smear" style="left:227.3px;top:225.2px;width:24.0px;height:4.4px;background:linear-gradient(90deg,rgba(100,100,100,.6),rgba(150,150,150,0))"></div>
<div class="abs ind" style="left:204.5px;top:234.1px;width:12.5px;height:13.3px;"></div>
<div class="abs" style="left:217.0px;top:234.1px;width:502.0px;height:13.3px;background:#ffffff"></div>
<div class="t" id="t41" style="left:219.70px;top:238.02px;font-size:7.50px;letter-spacing:-0.161px;color:#222;">gc</div>
<div class="abs smear" style="left:227.3px;top:238.5px;width:29.0px;height:4.4px;background:linear-gradient(90deg,rgba(100,100,100,.6),rgba(150,150,150,0))"></div>
<div class="abs ind" style="left:204.5px;top:247.4px;width:12.5px;height:13.3px;"></div>
<div class="abs" style="left:217.0px;top:247.4px;width:502.0px;height:13.3px;background:#e7ebfb"></div>
<div class="t" id="t42" style="left:219.70px;top:251.35px;font-size:7.50px;letter-spacing:-0.183px;color:#222;">Kc</div>
<div class="abs smear" style="left:228.1px;top:251.8px;width:29.0px;height:4.4px;background:linear-gradient(90deg,rgba(100,100,100,.6),rgba(150,150,150,0))"></div>
<div class="abs ind" style="left:204.5px;top:260.7px;width:12.5px;height:13.3px;"></div>
<div class="abs" style="left:217.0px;top:260.7px;width:502.0px;height:13.3px;background:#ffffff"></div>
<div class="t" id="t43" style="left:219.70px;top:264.68px;font-size:7.50px;letter-spacing:-0.050px;color:#222;">m</div>
<div class="abs smear" style="left:225.9px;top:265.1px;width:35.0px;height:4.4px;background:linear-gradient(90deg,rgba(100,100,100,.6),rgba(150,150,150,0))"></div>
<div class="abs ind" style="left:204.5px;top:274.1px;width:12.5px;height:13.3px;"></div>
<div class="abs" style="left:217.0px;top:274.1px;width:502.0px;height:13.3px;background:#e7ebfb"></div>
<div class="t" id="t44" style="left:219.70px;top:278.01px;font-size:7.50px;letter-spacing:-0.372px;color:#222;">nu</div>
<div class="abs smear" style="left:227.3px;top:278.5px;width:29.0px;height:4.4px;background:linear-gradient(90deg,rgba(100,100,100,.6),rgba(150,150,150,0))"></div>
<div class="abs ind" style="left:204.5px;top:287.4px;width:12.5px;height:13.3px;"></div>
<div class="abs" style="left:217.0px;top:287.4px;width:502.0px;height:13.3px;background:#ffffff"></div>
<div class="t" id="t45" style="left:219.70px;top:290.97px;font-size:8.25px;letter-spacing:0.266px;color:#222;">sil</div>
<div class="abs smear" style="left:228.3px;top:291.8px;width:24.0px;height:4.4px;background:linear-gradient(90deg,rgba(100,100,100,.6),rgba(150,150,150,0))"></div>
<div class="abs ind" style="left:204.5px;top:300.7px;width:12.5px;height:13.3px;"></div>
<div class="abs" style="left:217.0px;top:300.7px;width:502.0px;height:13.3px;background:#e7ebfb"></div>
<div class="t" id="t46" style="left:219.70px;top:304.30px;font-size:8.25px;letter-spacing:0.354px;color:#222;">te</div>
<div class="abs smear" style="left:227.3px;top:305.1px;width:22.0px;height:4.4px;background:linear-gradient(90deg,rgba(100,100,100,.6),rgba(150,150,150,0))"></div>
<div class="abs ind" style="left:204.5px;top:314.1px;width:12.5px;height:13.3px;"></div>
<div class="abs" style="left:217.0px;top:314.1px;width:502.0px;height:13.3px;background:#ffffff"></div>
<div class="t" id="t47" style="left:219.70px;top:318.00px;font-size:7.50px;letter-spacing:0.050px;color:#222;">vc</div>
<div class="abs smear" style="left:227.3px;top:318.5px;width:29.0px;height:4.4px;background:linear-gradient(90deg,rgba(100,100,100,.6),rgba(150,150,150,0))"></div>
<svg class="abs" style="left:207px;top:183.600px" width="6" height="7" viewBox="0 0 6 7"><path d="M.8 .5 L5 3.500 L.8 6.500Z" fill="#111"/></svg>
<div class="abs" style="left:204.5px;top:464.5px;width:514.5px;height:16.0px;background:#f0f0f0;border-top:1px solid #a0a0a0"></div>
<div class="abs" style="left:204.5px;top:464.0px;width:48.5px;height:16.0px;background:#fff;border:1px solid #a0a0a0;border-top:none"></div>
<div class="t" id="t48" style="left:207.00px;top:467.60px;font-size:8.40px;letter-spacing:-0.166px;">Kayıt Listesi</div>
<div class="abs" style="left:253.0px;top:465.5px;width:40.0px;height:14.5px;border-right:1px solid #a0a0a0;border-bottom:1px solid #a0a0a0"></div>
<div class="t" id="t49" style="left:255.30px;top:467.60px;font-size:8.40px;letter-spacing:0.086px;">Filtreler</div>
<!-- window 2 : Guncelle - admin -->
<div class="abs" style="left:282.0px;top:124.0px;width:476.0px;height:402.0px;border:1px solid #39424f;border-radius:6px 6px 2px 2px;background:linear-gradient(180deg,rgba(0,0,0,0) 0,rgba(0,0,0,0) 22px,rgba(232,236,241,.95) 26px,rgba(232,236,241,.95) 111px,rgba(38,44,54,.95) 115px,rgba(60,50,60,.9) 128px,rgba(150,180,220,.9) 134px,rgba(0,0,0,0) 150px) 100% 0/6px 100% no-repeat,linear-gradient(180deg,rgba(255,255,255,0) 0,rgba(255,255,255,0) 24px,rgba(150,168,194,.9) 40px,rgba(150,168,194,.9) 80px,rgba(186,205,230,.95) 120px,rgba(200,218,242,.95) 100%) 0 0/100% 100% no-repeat,linear-gradient(180deg,rgba(255,255,255,.35) 0,rgba(255,255,255,0) 3px,rgba(255,255,255,0) 100%),linear-gradient(90deg,#ccd8e8 0,#c3d0e3 14%,#a6bbd6 21%,#8ea8ca 28%,#86a2c7 60%,#8ba6c9 72%,#a4b9d5 82%,#a9bdd7 100%);box-shadow:inset 0 0 0 1px rgba(255,255,255,.6),0 0 5px rgba(0,0,0,.45)"></div>
<svg class="abs" style="left:288.5px;top:129.5px;" width="12.0" height="11.5" viewBox="0 0 13 13"><circle cx="8.8" cy="3.6" r="2.4" fill="#f0c28a"/><path d="M5.5 12 Q5.5 6.6 8.8 6.6 Q12.5 6.6 12.5 12Z" fill="#3aa23a"/><circle cx="4.4" cy="4.4" r="2.5" fill="#f5cf9c"/><path d="M4.4 1.6 a2.6 2.6 0 0 1 2.6 2.4 L1.8 4 a2.6 2.6 0 0 1 2.6 -2.4Z" fill="#e0a31e"/><path d="M.5 12.5 Q.5 7.4 4.4 7.4 Q8.3 7.4 8.3 12.5Z" fill="#2d5fc4"/><path d="M4.4 7.6 L3.6 10.5 L4.4 11.5 L5.2 10.5Z" fill="#d63a2a"/></svg>
<div class="t" id="t50" style="left:304.00px;top:131.05px;font-size:8.90px;letter-spacing:0.157px;color:#0c0c0c;">Güncelle - admin</div>
<div class="abs cap" style="left:675.5px;top:124.0px;width:78.0px;height:14.6px;"><i style="width:21px"><svg width="20" height="13" viewBox="0 0 20 13" style="position:absolute;left:0;top:0"><rect x="6" y="7.500" width="8.500" height="2.800" fill="#fff" stroke="#4a5562" stroke-width=".7"/></svg></i><i style="width:21px"><svg width="20" height="13" viewBox="0 0 20 13" style="position:absolute;left:0;top:0"><rect x="6.500" y="3.500" width="7.500" height="6" fill="none" stroke="#fff" stroke-width="1.700"/><rect x="5.400" y="2.400" width="9.700" height="8.200" fill="none" stroke="#4a5562" stroke-width=".6"/><rect x="7.700" y="4.700" width="5.100" height="3.600" fill="none" stroke="#4a5562" stroke-width=".5"/></svg></i><i class="x" style="width:35px"><svg width="34" height="13" viewBox="0 0 34 13" style="position:absolute;left:0;top:0"><path d="M13.800 3.500 L20.200 9.800 M20.200 3.500 L13.800 9.800" stroke="#5a2018" stroke-width="3.300"/><path d="M13.800 3.500 L20.200 9.800 M20.200 3.500 L13.800 9.800" stroke="#fff" stroke-width="1.900"/></svg></i></div>
<div class="abs" style="left:287.0px;top:146.0px;width:467.0px;height:375.0px;background:#f0f0f0;border:1px solid #6f7c8c;box-shadow:0 0 0 1px rgba(255,255,255,.45)"></div>
<div class="abs menubar" style="left:288.0px;top:147.0px;width:465.0px;height:14.5px;"></div>
<div class="t" id="t51" style="left:293.60px;top:150.55px;font-size:8.30px;letter-spacing:0.196px;">Kayıt</div>
<div class="t" id="t52" style="left:324.00px;top:150.55px;font-size:8.30px;letter-spacing:0.284px;">İlgili Kayıtlar</div>
<div class="abs" style="left:288.0px;top:161.5px;width:465.0px;height:30.0px;border-bottom:1px solid #a0a0a0"></div>
<div class="abs grip" style="left:292.0px;top:164.0px;width:2.0px;height:25.0px;"></div>
<svg class="abs" style="left:305.5px;top:165.0px;" width="17.0" height="24.0" viewBox="0 0 19 26"><path d="M1.300 .6 L1.300 11.400 L4.300 8.900 L9.300 8.700 Z" fill="#1d1d1d" stroke="#fff" stroke-width=".7" stroke-linejoin="round"/><defs><radialGradient id="g11" cx="40%" cy="30%" r="75%"><stop offset="0" stop-color="#8ae07a"/><stop offset="1" stop-color="#2aa326"/></radialGradient></defs><circle cx="10.8" cy="18" r="7.5" fill="url(#g11)" stroke="#14801a" stroke-width=".6"/><path d="M6.675000000000001 18h8.25M10.8 13.875v8.25" stroke="#fff" stroke-width="2.5500000000000003" stroke-linecap="round"/></svg>
<svg class="abs" style="left:333.0px;top:166.0px;" width="22.0" height="23.0" viewBox="0 0 24 26"><defs><linearGradient id="g12" x1="0" y1="0" x2="1" y2="1"><stop offset="0" stop-color="#7fa6de"/><stop offset=".5" stop-color="#4a7bc4"/><stop offset="1" stop-color="#3565ad"/></linearGradient></defs><path d="M3.200 .8 L16.500 2.300 L19 5 L18.600 23 L1.200 20.200 L1.600 2.500 Z" fill="url(#g12)" stroke="#2f5a9e" stroke-width=".7"/><path d="M1.600 2.500 L3.200 .8 L3 20.500 L1.200 20.200Z" fill="#2a4f8e"/><path d="M6.800 1.400 L14.600 2.300 L14.500 8.200 L6.700 7.400Z" fill="#c9d7ea"/><path d="M11.400 2.600 L13.400 2.800 L13.300 7.300 L11.300 7.100Z" fill="#3a66aa"/><path d="M4.600 9.800 L16.400 11.300 L16.200 22.200 L4.400 20.400Z" fill="#f8fafc" stroke="#c4d0e0" stroke-width=".4"/><path d="M6 12.600L15 13.800M6 14.900L15 16.100M6 17.200L13 18.100" stroke="#aab6c8" stroke-width=".8"/><defs><radialGradient id="g13" cx="40%" cy="30%" r="75%"><stop offset="0" stop-color="#8ae07a"/><stop offset="1" stop-color="#2aa326"/></radialGradient></defs><circle cx="17.2" cy="19.2" r="6.3" fill="url(#g13)" stroke="#14801a" stroke-width=".6"/><path d="M13.735 19.2h6.930000000000001M17.2 15.735v6.930000000000001" stroke="none" stroke-width="2.394" stroke-linecap="round"/><path d="M14.200 19.400 a3.100 3.100 0 1 0 3 -3.200" fill="none" stroke="#fff" stroke-width="1.500"/><path d="M18.400 13.900 L15.600 16.400 L18.700 18.100Z" fill="#fff"/></svg>
<svg class="abs" style="left:363.0px;top:167.0px;" width="18.0" height="21.0" viewBox="0 0 20 24"><defs><linearGradient id="g14" x1="0" y1="0" x2="1" y2="1"><stop offset="0" stop-color="#7fa6de"/><stop offset=".5" stop-color="#4a7bc4"/><stop offset="1" stop-color="#3565ad"/></linearGradient></defs><path d="M3.200 .8 L16.500 2.300 L19 5 L18.600 23 L1.200 20.200 L1.600 2.500 Z" fill="url(#g14)" stroke="#2f5a9e" stroke-width=".7"/><path d="M1.600 2.500 L3.200 .8 L3 20.500 L1.200 20.200Z" fill="#2a4f8e"/><path d="M6.800 1.400 L14.600 2.300 L14.500 8.200 L6.700 7.400Z" fill="#c9d7ea"/><path d="M11.400 2.600 L13.400 2.800 L13.300 7.300 L11.300 7.100Z" fill="#3a66aa"/><path d="M4.600 9.800 L16.400 11.300 L16.200 22.200 L4.400 20.400Z" fill="#f8fafc" stroke="#c4d0e0" stroke-width=".4"/><path d="M6 12.600L15 13.800M6 14.900L15 16.100M6 17.200L13 18.100" stroke="#aab6c8" stroke-width=".8"/></svg>
<div class="t" id="t53" style="left:387.60px;top:172.73px;font-size:8.34px;letter-spacing:0.291px;">Kaydet</div>
<svg class="abs" style="left:427.0px;top:166.0px;" width="22.0" height="23.0" viewBox="0 0 24 26"><defs><linearGradient id="g15" x1="0" y1="0" x2="1" y2="1"><stop offset="0" stop-color="#7fa6de"/><stop offset=".5" stop-color="#4a7bc4"/><stop offset="1" stop-color="#3565ad"/></linearGradient></defs><path d="M3.200 .8 L16.500 2.300 L19 5 L18.600 23 L1.200 20.200 L1.600 2.500 Z" fill="url(#g15)" stroke="#2f5a9e" stroke-width=".7"/><path d="M1.600 2.500 L3.200 .8 L3 20.500 L1.200 20.200Z" fill="#2a4f8e"/><path d="M6.800 1.400 L14.600 2.300 L14.500 8.200 L6.700 7.400Z" fill="#c9d7ea"/><path d="M11.400 2.600 L13.400 2.800 L13.300 7.300 L11.300 7.100Z" fill="#3a66aa"/><path d="M4.600 9.800 L16.400 11.300 L16.200 22.200 L4.400 20.400Z" fill="#f8fafc" stroke="#c4d0e0" stroke-width=".4"/><path d="M6 12.600L15 13.800M6 14.900L15 16.100M6 17.200L13 18.100" stroke="#aab6c8" stroke-width=".8"/><defs><radialGradient id="g16" cx="40%" cy="30%" r="75%"><stop offset="0" stop-color="#8ae07a"/><stop offset="1" stop-color="#2aa326"/></radialGradient></defs><circle cx="17.2" cy="19.2" r="6.3" fill="url(#g16)" stroke="#14801a" stroke-width=".6"/><path d="M13.735 19.2h6.930000000000001M17.2 15.735v6.930000000000001" stroke="#fff" stroke-width="2.394" stroke-linecap="round"/></svg>
<svg class="abs" style="left:459.0px;top:167.5px;" width="14.0" height="20.0" viewBox="0 0 16 22"><defs><linearGradient id="g17" x1="0" y1="0" x2="1" y2="1"><stop offset="0" stop-color="#eef3fa"/><stop offset="1" stop-color="#bccbe0"/></linearGradient></defs><path d="M.8 .8 L14 3.200 L15.200 21.500 L2.600 19.400 Z" fill="url(#g17)" stroke="#a9b7c9" stroke-width=".8"/><path d="M2.200 2.500 L12.800 4.400 L13.400 12 L2.900 10.600Z" fill="#fff" opacity=".35"/><defs><radialGradient id="g18" cx="40%" cy="30%" r="75%"><stop offset="0" stop-color="#8ae07a"/><stop offset="1" stop-color="#2aa326"/></radialGradient></defs><circle cx="11" cy="15.5" r="4.5" fill="url(#g18)" stroke="#14801a" stroke-width=".6"/><path d="M8.525 15.5h4.95M11 13.025v4.95" stroke="#fff" stroke-width="1.71" stroke-linecap="round"/></svg>
<div class="t" id="t54" style="left:481.40px;top:172.60px;font-size:8.60px;letter-spacing:0.290px;">Yeni</div>
<svg class="abs" style="left:510.5px;top:167.0px;" width="17.5" height="19.0" viewBox="0 0 18 19"><defs><linearGradient id="g19" x1="0" y1="0" x2="1" y2="0"><stop offset="0" stop-color="#bfe0f8"/><stop offset=".3" stop-color="#58a6ea"/><stop offset=".65" stop-color="#2f80d8"/><stop offset="1" stop-color="#9fcdf3"/></linearGradient></defs><path d="M1.500 2.800 H13.500 L12.200 16.500 Q7.500 18.200 2.800 16.500 Z" fill="url(#g19)" stroke="#3b6ea8" stroke-width=".6"/><path d="M4.200 5 L5 15.500 L6.600 15.800 L6 5Z" fill="#fff" opacity=".45"/><ellipse cx="7.500" cy="2.700" rx="6.400" ry="1.700" fill="#e3e9f0" stroke="#8e9cac" stroke-width=".7"/><ellipse cx="7.500" cy="2.900" rx="4.800" ry=".9" fill="#2c6fc0" opacity=".55"/><defs><radialGradient id="g20" cx="40%" cy="30%" r="75%"><stop offset="0" stop-color="#ff8d7d"/><stop offset="1" stop-color="#d3180f"/></radialGradient></defs><circle cx="13" cy="14" r="4.2" fill="url(#g20)" stroke="#a30f0a" stroke-width=".6"/><path d="M11.236 12.236l3.528 3.528M14.764 12.236l-3.528 3.528" stroke="#fff" stroke-width="1.764" stroke-linecap="round"/></svg>
<div class="t" id="t55" style="left:534.80px;top:172.75px;font-size:8.30px;letter-spacing:0.189px;">Sil</div>
<svg class="abs" style="left:555.5px;top:167.0px;" width="21.0" height="21.0" viewBox="0 0 22 22"><defs><radialGradient id="g21" cx="50%" cy="88%" r="85%"><stop offset="0" stop-color="#5cc0e8"/><stop offset=".45" stop-color="#2268c0"/><stop offset="1" stop-color="#153f88"/></radialGradient></defs><circle cx="11" cy="11" r="10.200" fill="url(#g21)" stroke="#12376f" stroke-width=".8"/><path d="M2.500 9 A8.700 8.700 0 0 1 19.500 9 Q11 12.500 2.500 9Z" fill="#fff" opacity=".22"/><path d="M11 4.500 L17 11 H13.700 V16.500 H8.300 V11 H5 Z" fill="#fdfdfd" stroke="#0f3a7a" stroke-width=".4"/></svg>
<svg class="abs" style="left:587.0px;top:167.0px;" width="21.0" height="21.0" viewBox="0 0 22 22"><defs><radialGradient id="g22" cx="50%" cy="88%" r="85%"><stop offset="0" stop-color="#5cc0e8"/><stop offset=".45" stop-color="#2268c0"/><stop offset="1" stop-color="#153f88"/></radialGradient></defs><circle cx="11" cy="11" r="10.200" fill="url(#g22)" stroke="#12376f" stroke-width=".8"/><path d="M2.500 9 A8.700 8.700 0 0 1 19.500 9 Q11 12.500 2.500 9Z" fill="#fff" opacity=".22"/><path d="M11 17.500 L17 11 H13.700 V5.500 H8.300 V11 H5 Z" fill="#fdfdfd" stroke="#0f3a7a" stroke-width=".4"/></svg>
<svg class="abs" style="left:616.5px;top:166.5px;" width="23.0" height="21.5" viewBox="0 0 24 22"><defs><linearGradient id="g23" x1="0" y1="0" x2="0" y2="1"><stop offset="0" stop-color="#ff6a4d"/><stop offset="1" stop-color="#d9200f"/></linearGradient></defs><rect x="1" y="1.5" width="17" height="13" fill="#eef3fa" stroke="#aebbd0" stroke-width=".8"/><rect x="1" y="1.5" width="17" height="2.2" fill="#c2d1e6"/><path d="M13 .8h1M15 .8h1M17 .8h.6" stroke="#6f8fc0" stroke-width=".8"/><path d="M4.5 11 L8 9 L11.5 13.5 L20 5 L23 8 L11.5 21 Z" fill="url(#g23)" stroke="#b81a0c" stroke-width=".5"/></svg>
<div class="abs" style="left:292.0px;top:212.0px;width:456.0px;height:304.5px;background:#f1f1f1;border:1px solid #a9adb0;box-shadow:inset 1px 1px 0 #fff"></div>
<div class="abs tab" style="left:293.0px;top:196.8px;width:76.0px;height:15.7px;"></div>
<div class="t" id="t56" style="left:299.00px;top:200.65px;font-size:8.30px;letter-spacing:0.269px;"><u>K</u>ullanıcı Bilgileri</div>
<div class="abs tab" style="left:368.5px;top:196.8px;width:66.5px;height:15.7px;"></div>
<div class="t" id="t57" style="left:374.50px;top:200.65px;font-size:8.30px;letter-spacing:0.281px;"><u>Y</u>etki Paketleri</div>
<div class="abs tab" style="left:434.5px;top:196.8px;width:77.0px;height:15.7px;"></div>
<div class="t" id="t58" style="left:440.00px;top:200.65px;font-size:8.30px;letter-spacing:0.271px;"><u>K</u>ullanıcı Grupları</div>
<div class="abs" style="left:511.0px;top:195.0px;width:54.0px;height:18.0px;border:1px solid #919b9c;border-bottom:none;border-radius:2px 2px 0 0;background:#f6f6f6"></div>
<div class="t" id="t59" style="left:519.60px;top:199.35px;font-size:8.30px;letter-spacing:0.265px;"><u>S</u>ertifikalar</div>
<div class="abs" style="left:293.0px;top:213.0px;width:454.0px;height:35.0px;background:#f1f1f1"></div>
<div class="abs grip" style="left:297.0px;top:216.0px;width:2.0px;height:29.0px;"></div>
<svg class="abs" style="left:309.5px;top:221.5px;" width="14.5" height="20.5" viewBox="0 0 16 22"><defs><linearGradient id="g24" x1="0" y1="0" x2="1" y2="1"><stop offset="0" stop-color="#eef3fa"/><stop offset="1" stop-color="#bccbe0"/></linearGradient></defs><path d="M.8 .8 L14 3.200 L15.200 21.500 L2.600 19.400 Z" fill="url(#g24)" stroke="#a9b7c9" stroke-width=".8"/><path d="M2.200 2.500 L12.800 4.400 L13.400 12 L2.900 10.600Z" fill="#fff" opacity=".35"/><defs><radialGradient id="g25" cx="40%" cy="30%" r="75%"><stop offset="0" stop-color="#8ae07a"/><stop offset="1" stop-color="#2aa326"/></radialGradient></defs><circle cx="11" cy="15.5" r="4.5" fill="url(#g25)" stroke="#14801a" stroke-width=".6"/><path d="M8.525 15.5h4.95M11 13.025v4.95" stroke="#fff" stroke-width="1.71" stroke-linecap="round"/></svg>
<div class="t" id="t60" style="left:332.60px;top:226.75px;font-size:8.50px;letter-spacing:0.290px;">Yeni</div>
<svg class="abs" style="left:363.5px;top:221.5px;" width="17.5" height="20.5" viewBox="0 0 19 22"><defs><linearGradient id="g27" x1="0" y1="0" x2="1" y2="1"><stop offset="0" stop-color="#f1f1f1"/><stop offset="1" stop-color="#c9c9c9"/></linearGradient></defs><path d="M.8 .8 L14 3.200 L15.200 21.500 L2.600 19.400 Z" fill="url(#g27)" stroke="#b9b9b9" stroke-width=".8"/><path d="M2.200 2.500 L12.800 4.400 L13.400 12 L2.900 10.600Z" fill="#fff" opacity=".35"/><path d="M3.500 20.500 C6.500 14.500 9.500 12.500 12.500 11.700 L11 8.800 L18.800 8.300 L17.500 16.300 L15.300 14.200 C11.500 15.500 8 17.500 3.500 20.500Z" fill="#8a8a8a" stroke="#6e6e6e" stroke-width=".5"/></svg>
<div class="t" id="t61" style="left:386.00px;top:226.77px;font-size:8.46px;letter-spacing:0.291px;color:#9a9a9a;">Değiştir</div>
<svg class="abs" style="left:426.0px;top:220.0px;" width="20.5" height="22.5" viewBox="0 0 20 22"><path d="M8 1.5 H15 L18.5 5 V19.5 H8 Z" fill="#f7f9fc" stroke="#b4bcc8" stroke-width=".7"/><path d="M15 1.5V5H18.5" fill="#e3e8ef" stroke="#b4bcc8" stroke-width=".6"/><path d="M5.5 13.5 L1.5 19.5" stroke="#a5a5a5" stroke-width="2.4" stroke-linecap="round"/><circle cx="8.5" cy="9.5" r="5.3" fill="#ededed" stroke="#a8a8a8" stroke-width="1.3"/><path d="M5.3 8.5 A3.6 3.6 0 0 1 9 5.8" stroke="#fff" stroke-width="1.1" fill="none" stroke-linecap="round"/></svg>
<div class="t" id="t62" style="left:452.00px;top:226.73px;font-size:8.53px;letter-spacing:0.291px;color:#9a9a9a;">İncele</div>
<svg class="abs" style="left:487.0px;top:221.5px;" width="17.5" height="19.5" viewBox="0 0 18 19"><defs><linearGradient id="g29" x1="0" y1="0" x2="1" y2="0"><stop offset="0" stop-color="#e2e2e2"/><stop offset=".35" stop-color="#a9a9a9"/><stop offset=".7" stop-color="#8f8f8f"/><stop offset="1" stop-color="#d0d0d0"/></linearGradient></defs><path d="M1.500 2.800 H13.500 L12.200 16.500 Q7.500 18.200 2.800 16.500 Z" fill="url(#g29)" stroke="#7c7c7c" stroke-width=".6"/><path d="M4.200 5 L5 15.500 L6.600 15.800 L6 5Z" fill="#fff" opacity=".45"/><ellipse cx="7.500" cy="2.700" rx="6.400" ry="1.700" fill="#e9e9e9" stroke="#8f8f8f" stroke-width=".7"/><ellipse cx="7.500" cy="2.900" rx="4.800" ry=".9" fill="#8a8a8a" opacity=".55"/><defs><radialGradient id="g30" cx="40%" cy="30%" r="75%"><stop offset="0" stop-color="#cfcfcf"/><stop offset="1" stop-color="#808080"/></radialGradient></defs><circle cx="13" cy="14" r="4.2" fill="url(#g30)" stroke="#707070" stroke-width=".6"/><path d="M11.236 12.236l3.528 3.528M14.764 12.236l-3.528 3.528" stroke="#fff" stroke-width="1.764" stroke-linecap="round"/></svg>
<div class="t" id="t63" style="left:512.00px;top:226.85px;font-size:8.30px;letter-spacing:-0.078px;color:#9a9a9a;">Sil</div>
<svg class="abs" style="left:531.0px;top:221.0px;" width="24.5" height="20.0" viewBox="0 0 24 20"><path d="M10.500 1.200 L18.500 .6 L20.500 6 L10 7.200 Z" fill="#4d5157" stroke="#33363b" stroke-width=".5"/><path d="M11.800 2.200 L17.800 1.700 L19 5.200 L11.500 6Z" fill="#6d7178"/><path d="M4.500 7.600 L20.500 5.600 L23.300 9.200 L7.500 11.600 Z" fill="#d3d6da" stroke="#7b7f86" stroke-width=".5"/><path d="M7.500 11.600 L23.300 9.200 L23.300 14.600 L7.500 17.400 Z" fill="#a4a8ae" stroke="#6c7077" stroke-width=".5"/><path d="M4.500 7.600 L7.500 11.600 L7.500 17.400 L4.500 13.200 Z" fill="#7c8087" stroke="#5c6067" stroke-width=".5"/><path d="M9 12.600 L21.500 10.700 L21.500 12 L9 14Z" fill="#4a4e54"/><path d="M1 14.200 L9.500 12.800 L14.500 17.600 L5 19.500 Z" fill="#fdfdfd" stroke="#a3a7ad" stroke-width=".5"/><circle cx="21.300" cy="13.300" r=".7" fill="#86d860"/></svg>
<div class="t" id="t64" style="left:557.00px;top:226.85px;font-size:8.30px;letter-spacing:0.271px;color:#9a9a9a;">Yazdır</div>
<svg class="abs" style="left:594.0px;top:219.5px;" width="24.5" height="24.5" viewBox="0 0 23 23"><defs><linearGradient id="g31" x1="0" y1="0" x2="1" y2="0"><stop offset="0" stop-color="#66b1f2"/><stop offset=".5" stop-color="#2f86e0"/><stop offset="1" stop-color="#1b5fb8"/></linearGradient></defs><rect x="8.5" y="8" width="13.5" height="14" fill="#fff" stroke="#5f8fca" stroke-width=".8"/><rect x="8.5" y="8" width="13.5" height="3" fill="#9cc3ee"/><path d="M8.5 11H22M8.5 14.6H22M8.5 18.2H22M13 8V22M17.5 8V22" stroke="#7fa8da" stroke-width=".7"/><path d="M1 1.2 H15 L10 8.5 V21 L6.2 21 V8.5 Z" fill="url(#g31)" stroke="#1d5cae" stroke-width=".6"/><ellipse cx="8" cy="1.8" rx="7" ry="1.3" fill="#8cc6f7"/></svg>
<div class="t" id="t65" style="left:621.00px;top:226.72px;font-size:8.56px;letter-spacing:0.291px;">Filtrele</div>
<svg class="abs" style="left:657px;top:228px" width="8" height="5" viewBox="0 0 8 5"><path d="M.5 .5 H7 L3.750 4.500Z" fill="#111"/></svg>
<div class="abs" style="left:294.5px;top:248.5px;width:439.5px;height:255.0px;background:#fff"></div>
<div class="abs ind" style="left:294.5px;top:248.5px;width:13.0px;height:14.0px;"></div>
<div class="abs hdro" style="left:307.5px;top:248.5px;width:164.0px;height:14.0px;"></div>
<div class="t b" id="t66" style="left:311.00px;top:251.75px;font-size:8.30px;letter-spacing:0.195px;color:#000;">Açıklama</div>
<svg class="abs" style="left:461px;top:252.500px" width="8" height="6" viewBox="0 0 8 6"><path d="M.3 5.500 H7.700 L4 .5Z" fill="#111"/></svg>
<div class="abs hdr" style="left:471.5px;top:248.5px;width:133.0px;height:14.0px;"></div>
<div class="t b" id="t67" style="left:475.20px;top:251.75px;font-size:8.30px;letter-spacing:0.051px;color:#000;">Başlangıç Tarihi</div>
<div class="abs hdr" style="left:604.5px;top:248.5px;width:129.5px;height:14.0px;"></div>
<div class="t b" id="t68" style="left:605.50px;top:251.75px;font-size:8.30px;letter-spacing:0.145px;color:#000;">Bitiş Tarihi</div>
<div class="abs" style="left:734.0px;top:248.5px;width:13.5px;height:255.0px;background:#f0f0f0"></div>
<svg class="abs" style="left:738px;top:254px" width="7" height="5" viewBox="0 0 7 5"><path d="M.3 4.500 H6.700 L3.500 .5Z" fill="#444"/></svg>
<div class="abs ind" style="left:294.5px;top:262.5px;width:13.0px;height:17.5px;"></div>
<div class="abs" style="left:307.5px;top:262.5px;width:426.5px;height:17.5px;background:#fffde3;border-bottom:1px solid #e9e4bf"></div>
<div class="abs" style="left:293.0px;top:497.0px;width:454.0px;height:1.0px;background:#a0a0a0"></div>
<div class="abs" style="left:293.0px;top:497.0px;width:54.0px;height:16.5px;background:#fff;border:1px solid #a0a0a0;border-top:none"></div>
<div class="t" id="t69" style="left:297.40px;top:501.30px;font-size:8.40px;letter-spacing:0.111px;">Kayıt Listesi</div>
<div class="abs" style="left:347.0px;top:498.0px;width:37.0px;height:15.5px;border-right:1px solid #a0a0a0;border-bottom:1px solid #a0a0a0"></div>
<div class="t" id="t70" style="left:350.20px;top:501.30px;font-size:8.40px;letter-spacing:0.209px;">Filtreler</div>
<div class="t" id="t71" style="left:386.50px;top:501.30px;font-size:8.40px;">K</div>
<!-- window 3 : Yeni Kayit -->
<div class="abs" style="left:388.0px;top:264.6px;width:442.0px;height:245.4px;border:1px solid #12161c;border-radius:7px 7px 5px 5px;background:radial-gradient(ellipse 120px 16px at 105px 15px,rgba(255,255,255,.55),rgba(255,255,255,0) 100%),linear-gradient(180deg,#8a9097 0,#7b8189 30px,#4a4f57 110px,#24282e 170px,#202429 100%) 100% 0/6px 100% no-repeat,linear-gradient(90deg,rgba(0,0,0,0) 0,rgba(0,0,0,0) 81%,#22262b 85.5%) 0 100%/100% 7px no-repeat,linear-gradient(90deg,#cddff6 0,#bad5f3 30%,#a8caef 55%,#a4c6ec 79%,#8796aa 82.500%,#6f767f 85%,#6a717a 92%,#868c93 100%);box-shadow:inset 0 0 0 1px rgba(255,255,255,.55),0 0 6px rgba(0,0,0,.55)"></div>
<svg class="abs" style="left:396px;top:273.500px" width="15" height="12" viewBox="0 0 15 12"><rect x=".5" y=".5" width="14" height="11" fill="#f4f6f8" stroke="#8e99a8" stroke-width=".9"/><rect x="2" y="2.500" width="5" height="7" fill="#4a9a7a"/><rect x="7.500" y="2.500" width="2.500" height="7" fill="#3d6fb5"/><rect x="11" y="2.500" width="2" height="4" fill="#c9d3e0"/></svg>
<div class="t" id="t72" style="left:417.50px;top:273.65px;font-size:13.00px;letter-spacing:-0.562px;color:#0a0a0a;">Yeni Kayıt (Kullanıcı Anahtarı)</div>
<div class="abs cap act" style="left:720.5px;top:265.5px;width:103.5px;height:19.5px;"><i style="width:28.500px"><svg width="28" height="18" viewBox="0 0 28 18" style="position:absolute;left:0;top:0"><rect x="8.500" y="10" width="11" height="4" fill="#fff" stroke="#3f4a58" stroke-width=".8"/></svg></i><i style="width:28.500px"><svg width="28" height="18" viewBox="0 0 28 18" style="position:absolute;left:0;top:0"><rect x="9.500" y="5.500" width="9" height="6.800" fill="none" stroke="#fff" stroke-width="2.200"/><rect x="8.100" y="4.100" width="11.800" height="9.600" fill="none" stroke="#3f4a58" stroke-width=".7"/><rect x="10.900" y="6.900" width="6.200" height="4" fill="none" stroke="#3f4a58" stroke-width=".6"/></svg></i><i class="x" style="width:45px"><svg width="45" height="18" viewBox="0 0 45 18" style="position:absolute;left:0;top:0"><path d="M18 4.500 L27 13.500 M27 4.500 L18 13.500" stroke="#4f1a12" stroke-width="4.600"/><path d="M18 4.500 L27 13.500 M27 4.500 L18 13.500" stroke="#fff" stroke-width="2.800"/></svg></i></div>
<div class="abs" style="left:394.5px;top:293.5px;width:429.5px;height:210.0px;background:#f0f0f0;border:1px solid #5d6978;box-shadow:0 0 0 1px rgba(255,255,255,.35)"></div>
<div class="abs menubar" style="left:395.5px;top:294.5px;width:427.5px;height:19.5px;"></div>
<div class="t" id="t73" style="left:403.00px;top:299.04px;font-size:12.20px;letter-spacing:-0.396px;">Kayıt</div>
<div class="t" id="t74" style="left:442.50px;top:299.04px;font-size:12.20px;letter-spacing:-0.080px;">İlgili Kayıtlar</div>
<div class="abs" style="left:395.5px;top:314.0px;width:427.5px;height:39.0px;border-bottom:1px solid #a0a0a0"></div>
<div class="abs" style="left:400.5px;top:316.0px;width:2.0px;height:36.0px;background:repeating-linear-gradient(180deg,#b4b4b4 0,#b4b4b4 1.300px,transparent 1.300px,transparent 3.800px)"></div>
<svg class="abs" style="left:418.0px;top:317.5px;" width="22.0" height="31.0" viewBox="0 0 19 26"><path d="M1.300 .6 L1.300 11.400 L4.300 8.900 L9.300 8.700 Z" fill="#5a5a5a" stroke="#fff" stroke-width=".7" stroke-linejoin="round"/><defs><radialGradient id="g32" cx="40%" cy="30%" r="75%"><stop offset="0" stop-color="#d9d9d9"/><stop offset="1" stop-color="#8d8d8d"/></radialGradient></defs><circle cx="10.8" cy="18" r="7.5" fill="url(#g32)" stroke="#7a7a7a" stroke-width=".6"/><path d="M6.675000000000001 18h8.25M10.8 13.875v8.25" stroke="#fff" stroke-width="2.0250000000000004" stroke-linecap="round"/></svg>
<svg class="abs" style="left:453.2px;top:319.0px;" width="26.5" height="30.0" viewBox="0 0 20 24"><defs><linearGradient id="g33" x1="0" y1="0" x2="1" y2="1"><stop offset="0" stop-color="#7fa6de"/><stop offset=".5" stop-color="#4a7bc4"/><stop offset="1" stop-color="#3565ad"/></linearGradient></defs><path d="M3.200 .8 L16.500 2.300 L19 5 L18.600 23 L1.200 20.200 L1.600 2.500 Z" fill="url(#g33)" stroke="#2f5a9e" stroke-width=".7"/><path d="M1.600 2.500 L3.200 .8 L3 20.500 L1.200 20.200Z" fill="#2a4f8e"/><path d="M6.800 1.400 L14.600 2.300 L14.500 8.200 L6.700 7.400Z" fill="#c9d7ea"/><path d="M11.400 2.600 L13.400 2.800 L13.300 7.300 L11.300 7.100Z" fill="#3a66aa"/><path d="M4.600 9.800 L16.400 11.300 L16.200 22.200 L4.400 20.400Z" fill="#f8fafc" stroke="#c4d0e0" stroke-width=".4"/><path d="M6 12.600L15 13.800M6 14.900L15 16.100M6 17.200L13 18.100" stroke="#aab6c8" stroke-width=".8"/></svg>
<div class="t" id="t75" style="left:486.60px;top:327.84px;font-size:12.20px;letter-spacing:-0.526px;">Kaydet</div>
<svg class="abs" style="left:537.5px;top:319.0px;" width="29.0" height="30.5" viewBox="0 0 24 26"><defs><linearGradient id="g34" x1="0" y1="0" x2="1" y2="1"><stop offset="0" stop-color="#7fa6de"/><stop offset=".5" stop-color="#4a7bc4"/><stop offset="1" stop-color="#3565ad"/></linearGradient></defs><path d="M3.200 .8 L16.500 2.300 L19 5 L18.600 23 L1.200 20.200 L1.600 2.500 Z" fill="url(#g34)" stroke="#2f5a9e" stroke-width=".7"/><path d="M1.600 2.500 L3.200 .8 L3 20.500 L1.200 20.200Z" fill="#2a4f8e"/><path d="M6.800 1.400 L14.600 2.300 L14.500 8.200 L6.700 7.400Z" fill="#c9d7ea"/><path d="M11.400 2.600 L13.400 2.800 L13.300 7.300 L11.300 7.100Z" fill="#3a66aa"/><path d="M4.600 9.800 L16.400 11.300 L16.200 22.200 L4.400 20.400Z" fill="#f8fafc" stroke="#c4d0e0" stroke-width=".4"/><path d="M6 12.600L15 13.800M6 14.900L15 16.100M6 17.200L13 18.100" stroke="#aab6c8" stroke-width=".8"/><defs><radialGradient id="g35" cx="40%" cy="30%" r="75%"><stop offset="0" stop-color="#8ae07a"/><stop offset="1" stop-color="#2aa326"/></radialGradient></defs><circle cx="17.2" cy="19.2" r="6.3" fill="url(#g35)" stroke="#14801a" stroke-width=".6"/><path d="M13.735 19.2h6.930000000000001M17.2 15.735v6.930000000000001" stroke="#fff" stroke-width="2.394" stroke-linecap="round"/></svg>
<svg class="abs" style="left:579.5px;top:321.0px;" width="18.0" height="26.0" viewBox="0 0 16 22"><defs><linearGradient id="g36" x1="0" y1="0" x2="1" y2="1"><stop offset="0" stop-color="#eef3fa"/><stop offset="1" stop-color="#bccbe0"/></linearGradient></defs><path d="M.8 .8 L14 3.200 L15.200 21.500 L2.600 19.400 Z" fill="url(#g36)" stroke="#a9b7c9" stroke-width=".8"/><path d="M2.200 2.500 L12.800 4.400 L13.400 12 L2.900 10.600Z" fill="#fff" opacity=".35"/><defs><radialGradient id="g37" cx="40%" cy="30%" r="75%"><stop offset="0" stop-color="#8ae07a"/><stop offset="1" stop-color="#2aa326"/></radialGradient></defs><circle cx="11" cy="15.5" r="4.5" fill="url(#g37)" stroke="#14801a" stroke-width=".6"/><path d="M8.525 15.5h4.95M11 13.025v4.95" stroke="#fff" stroke-width="1.71" stroke-linecap="round"/></svg>
<div class="t" id="t76" style="left:608.70px;top:327.84px;font-size:12.20px;">Yeni</div>
<svg class="abs" style="left:646.5px;top:320.5px;" width="23.0" height="26.0" viewBox="0 0 18 19"><defs><linearGradient id="g38" x1="0" y1="0" x2="1" y2="0"><stop offset="0" stop-color="#e2e2e2"/><stop offset=".35" stop-color="#a9a9a9"/><stop offset=".7" stop-color="#8f8f8f"/><stop offset="1" stop-color="#d0d0d0"/></linearGradient></defs><path d="M1.500 2.800 H13.500 L12.200 16.500 Q7.500 18.200 2.800 16.500 Z" fill="url(#g38)" stroke="#7c7c7c" stroke-width=".6"/><path d="M4.200 5 L5 15.500 L6.600 15.800 L6 5Z" fill="#fff" opacity=".45"/><ellipse cx="7.500" cy="2.700" rx="6.400" ry="1.700" fill="#e9e9e9" stroke="#8f8f8f" stroke-width=".7"/><ellipse cx="7.500" cy="2.900" rx="4.800" ry=".9" fill="#8a8a8a" opacity=".55"/><defs><radialGradient id="g39" cx="40%" cy="30%" r="75%"><stop offset="0" stop-color="#cfcfcf"/><stop offset="1" stop-color="#808080"/></radialGradient></defs><circle cx="13" cy="14" r="4.2" fill="url(#g39)" stroke="#707070" stroke-width=".6"/><path d="M11.236 12.236l3.528 3.528M14.764 12.236l-3.528 3.528" stroke="#fff" stroke-width="1.764" stroke-linecap="round"/></svg>
<div class="t" id="t77" style="left:679.50px;top:327.84px;font-size:12.20px;letter-spacing:-0.682px;color:#9a9a9a;">Sil</div>
<svg class="abs" style="left:706.0px;top:321.5px;" width="27.0" height="27.0" viewBox="0 0 22 22"><defs><radialGradient id="g40" cx="50%" cy="88%" r="85%"><stop offset="0" stop-color="#dcdcdc"/><stop offset=".45" stop-color="#b5b5b5"/><stop offset="1" stop-color="#8e8e8e"/></radialGradient></defs><circle cx="11" cy="11" r="10.200" fill="url(#g40)" stroke="#808080" stroke-width=".8"/><path d="M2.500 9 A8.700 8.700 0 0 1 19.500 9 Q11 12.500 2.500 9Z" fill="#fff" opacity=".22"/><path d="M11 4.500 L17 11 H13.700 V16.500 H8.300 V11 H5 Z" fill="#fdfdfd" stroke="#8a8a8a" stroke-width=".4"/></svg>
<svg class="abs" style="left:746.5px;top:321.5px;" width="27.0" height="27.0" viewBox="0 0 22 22"><defs><radialGradient id="g41" cx="50%" cy="88%" r="85%"><stop offset="0" stop-color="#dcdcdc"/><stop offset=".45" stop-color="#b5b5b5"/><stop offset="1" stop-color="#8e8e8e"/></radialGradient></defs><circle cx="11" cy="11" r="10.200" fill="url(#g41)" stroke="#808080" stroke-width=".8"/><path d="M2.500 9 A8.700 8.700 0 0 1 19.500 9 Q11 12.500 2.500 9Z" fill="#fff" opacity=".22"/><path d="M11 17.500 L17 11 H13.700 V5.500 H8.300 V11 H5 Z" fill="#fdfdfd" stroke="#8a8a8a" stroke-width=".4"/></svg>
<svg class="abs" style="left:784.5px;top:321.0px;" width="31.0" height="28.5" viewBox="0 0 24 22"><defs><linearGradient id="g42" x1="0" y1="0" x2="0" y2="1"><stop offset="0" stop-color="#ff6a4d"/><stop offset="1" stop-color="#d9200f"/></linearGradient></defs><rect x="1" y="1.5" width="17" height="13" fill="#eef3fa" stroke="#aebbd0" stroke-width=".8"/><rect x="1" y="1.5" width="17" height="2.2" fill="#c2d1e6"/><path d="M13 .8h1M15 .8h1M17 .8h.6" stroke="#6f8fc0" stroke-width=".8"/><path d="M4.5 11 L8 9 L11.5 13.5 L20 5 L23 8 L11.5 21 Z" fill="url(#g42)" stroke="#b81a0c" stroke-width=".5"/></svg>
<div class="t" id="t78" style="left:404.20px;top:366.04px;font-size:12.20px;letter-spacing:-0.228px;">Kullanıcı</div>
<div class="abs" style="left:495.0px;top:362.5px;width:304.0px;height:19.0px;background:#f0f0f0;border:1px solid #b5b5b5"></div>
<div class="t" id="t79" style="left:500.00px;top:366.04px;font-size:12.20px;letter-spacing:-0.119px;">admin [G</div>
<div class="abs smear" style="left:550.0px;top:367.5px;width:102.0px;height:9.0px;background:linear-gradient(90deg,rgba(120,120,120,.7),rgba(150,150,150,.55) 60%,rgba(160,160,160,.2))"></div>
<div class="abs" style="left:764.5px;top:364.0px;width:15.5px;height:16.0px;background:linear-gradient(180deg,#fff,#e4e4e4);border:1px solid #6f6f6f;border-radius:2px"></div>
<div class="t b" id="t80" style="left:767.00px;top:367.78px;font-size:11.50px;letter-spacing:.3px;">...</div>
<div class="abs" style="left:781.0px;top:364.0px;width:16.5px;height:16.0px;background:linear-gradient(180deg,#d9e8fb,#a9c8f0);border:1px solid #4a78b8;border-radius:2px"></div>
<svg class="abs" style="left:784px;top:367.500px" width="11" height="9" viewBox="0 0 11 9"><rect x=".5" y=".5" width="10" height="8" fill="#eaf2fc" stroke="#3f66a8" stroke-width=".9"/><rect x=".5" y=".5" width="10" height="2.300" fill="#4d78bd"/><path d="M2.500 5.500h6" stroke="#3f66a8" stroke-width=".8" stroke-dasharray="1.300 .7"/></svg>
<div class="t" id="t81" style="left:404.20px;top:389.74px;font-size:12.20px;letter-spacing:-0.166px;">Açıklama</div>
<div class="abs" style="left:495.0px;top:385.5px;width:304.0px;height:20.0px;background:#fff;border:1px solid #8db2e3;box-shadow:inset 0 0 0 1px #d5e6f9;border-radius:1px"></div>
<div class="t" id="t82" style="left:404.20px;top:412.24px;font-size:12.20px;letter-spacing:-0.201px;">Başlangıç Tarihi</div>
<div class="abs" style="left:495.0px;top:409.0px;width:119.5px;height:19.5px;background:#fff;border:1px solid #b5b5b5"></div>
<div class="t" id="t83" style="left:499.60px;top:413.54px;font-size:11.80px;letter-spacing:-0.495px;">18.10.2012</div>
<div class="t" id="t84" style="left:404.20px;top:435.34px;font-size:12.20px;letter-spacing:-0.084px;">Bitiş Tarihi</div>
<div class="abs" style="left:495.0px;top:432.0px;width:119.5px;height:19.5px;background:#fff;border:1px solid #b5b5b5"></div>
<div class="t" id="t85" style="left:499.60px;top:436.64px;font-size:11.80px;letter-spacing:-0.495px;">18.10.2013</div>
<div class="abs" style="left:596.0px;top:411.0px;width:16.5px;height:15.5px;background:linear-gradient(180deg,#e3eefc,#b4cff2);border:1px solid #2f5fa8;border-radius:2px"></div>
<svg class="abs" style="left:599px;top:415.5px" width="11" height="8" viewBox="0 0 11 8"><path d="M1.500 1.500 L5.500 5.500 L9.500 1.500" fill="none" stroke="#14306b" stroke-width="2.300"/></svg>
<div class="abs" style="left:596.0px;top:434.0px;width:16.5px;height:15.5px;background:linear-gradient(180deg,#e3eefc,#b4cff2);border:1px solid #2f5fa8;border-radius:2px"></div>
<svg class="abs" style="left:599px;top:438.5px" width="11" height="8" viewBox="0 0 11 8"><path d="M1.500 1.500 L5.500 5.500 L9.500 1.500" fill="none" stroke="#14306b" stroke-width="2.300"/></svg>
<div class="t" id="t86" style="left:404.20px;top:460.64px;font-size:12.20px;letter-spacing:-0.185px;">Kayıt Durumu</div>
<div class="abs" style="left:495.0px;top:455.0px;width:98.0px;height:23.0px;background:linear-gradient(180deg,#f4f4f4 0,#ebebeb 48%,#dddddd 52%,#d2d2d2 100%);border:1px solid #707070;border-radius:3px;box-shadow:inset 0 0 0 1px rgba(255,255,255,.7)"></div>
<div class="t" id="t87" style="left:499.00px;top:460.64px;font-size:12.20px;letter-spacing:-0.118px;">Kullanımda</div>
<svg class="abs" style="left:579px;top:464px" width="9" height="6" viewBox="0 0 9 6"><path d="M.5 .5 H8.500 L4.500 5Z" fill="#111"/></svg>
</body>
</html>
